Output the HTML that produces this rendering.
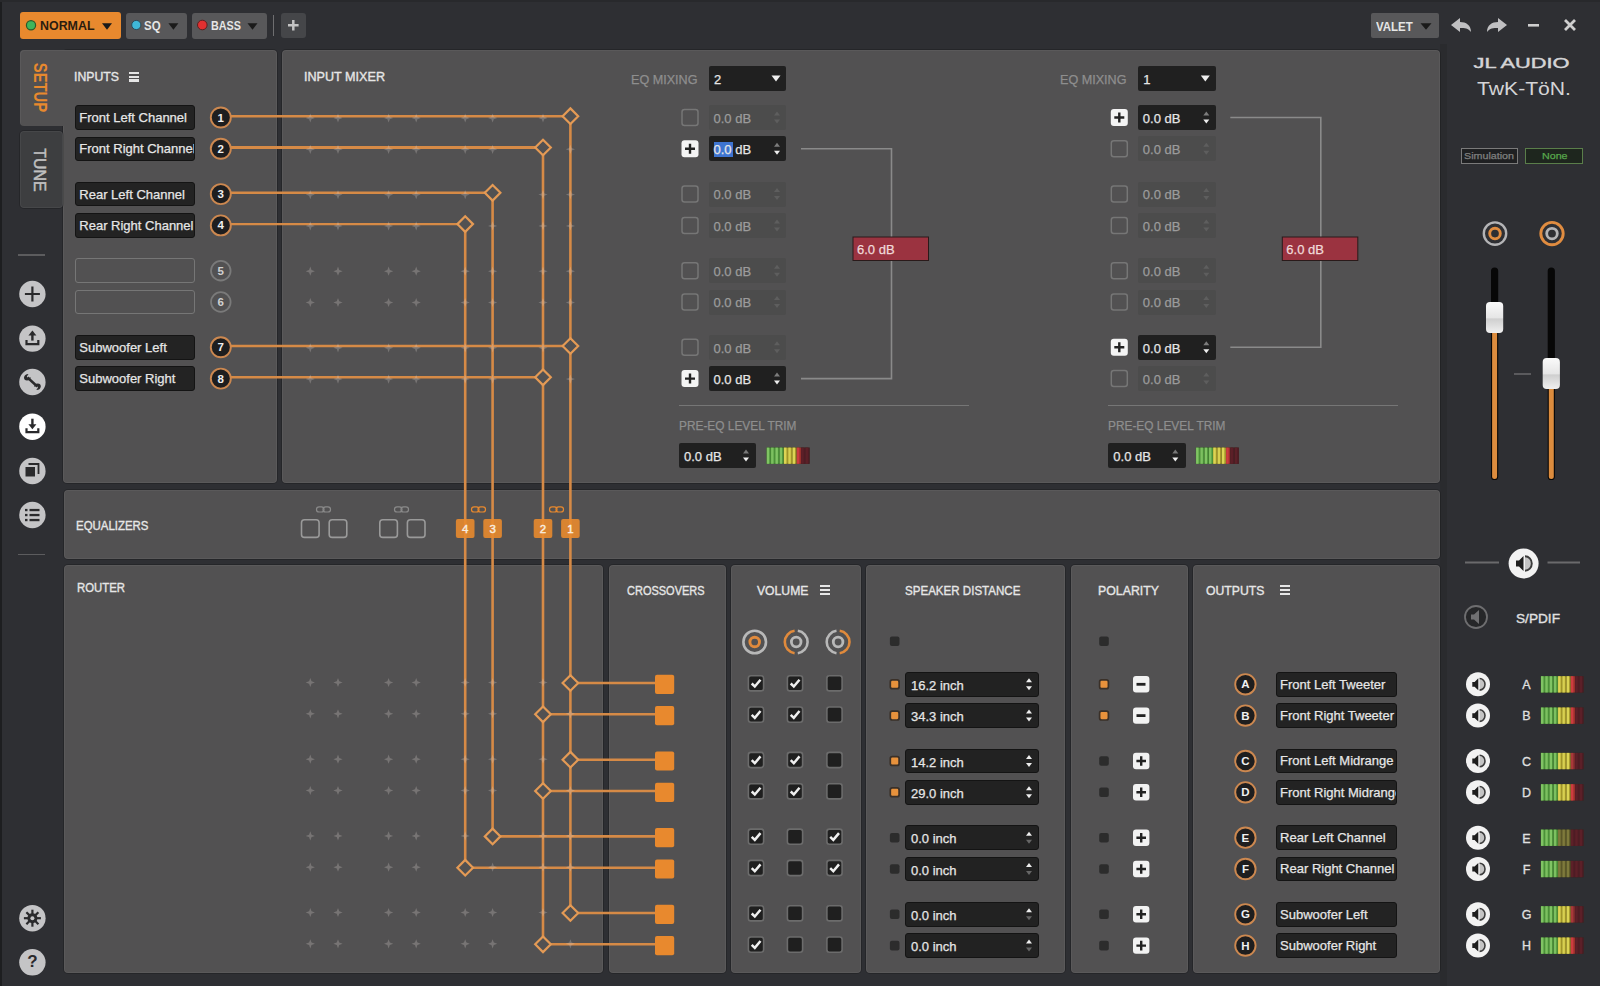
<!DOCTYPE html>
<html><head><meta charset="utf-8"><title>JL Audio TwK-TöN</title>
<style>
html,body{margin:0;padding:0;width:1600px;height:986px;overflow:hidden;background:#2e2f33;font-family:"Liberation Sans", sans-serif;}
#root{position:relative;width:1600px;height:986px;}
#root>div{position:absolute;box-sizing:border-box;}
#root>div>div{position:absolute}
svg{position:absolute;left:0;top:0;}
</style></head><body><div id="root">
<div style="left:0;top:0;width:2px;height:986px;background:#1d1e20"></div>
<div style="left:1440px;top:44px;width:7px;height:942px;background:#2a2b2e"></div>
<div style="left:0;top:0;width:1600px;height:2px;background:#28292c"></div>
<div style="left:63px;top:50px;width:214px;height:433px;background:#525152;border-radius:4px;box-shadow:inset 0 0 0 1px rgba(255,255,255,0.05), 0 0 0 1px rgba(0,0,0,0.18);"></div>
<div style="left:20px;top:50px;width:50px;height:76px;background:#525152;border-radius:4px 0 0 4px;box-shadow:inset 1px 1px 0 rgba(255,255,255,0.05)"></div>
<div style="left:20px;top:131px;width:43px;height:77px;background:#3d3e40;border-radius:4px;box-shadow:inset 0 0 0 1px rgba(255,255,255,0.05), 0 0 0 1px rgba(0,0,0,0.18);"></div>
<div style="left:282px;top:50px;width:1158px;height:433px;background:#525152;border-radius:4px;box-shadow:inset 0 0 0 1px rgba(255,255,255,0.05), 0 0 0 1px rgba(0,0,0,0.18);"></div>
<div style="left:63.5px;top:490px;width:1376.5px;height:69px;background:#525152;border-radius:4px;box-shadow:inset 0 0 0 1px rgba(255,255,255,0.05), 0 0 0 1px rgba(0,0,0,0.18);"></div>
<div style="left:64px;top:564.5px;width:538.5px;height:408.0px;background:#525152;border-radius:4px;box-shadow:inset 0 0 0 1px rgba(255,255,255,0.05), 0 0 0 1px rgba(0,0,0,0.18);"></div>
<div style="left:608.5px;top:564.5px;width:117.5px;height:408.0px;background:#525152;border-radius:4px;box-shadow:inset 0 0 0 1px rgba(255,255,255,0.05), 0 0 0 1px rgba(0,0,0,0.18);"></div>
<div style="left:730.5px;top:564.5px;width:130.0px;height:408.0px;background:#525152;border-radius:4px;box-shadow:inset 0 0 0 1px rgba(255,255,255,0.05), 0 0 0 1px rgba(0,0,0,0.18);"></div>
<div style="left:866px;top:564.5px;width:199px;height:408.0px;background:#525152;border-radius:4px;box-shadow:inset 0 0 0 1px rgba(255,255,255,0.05), 0 0 0 1px rgba(0,0,0,0.18);"></div>
<div style="left:1070.5px;top:564.5px;width:117.0px;height:408.0px;background:#525152;border-radius:4px;box-shadow:inset 0 0 0 1px rgba(255,255,255,0.05), 0 0 0 1px rgba(0,0,0,0.18);"></div>
<div style="left:1192.5px;top:564.5px;width:247.5px;height:408.0px;background:#525152;border-radius:4px;box-shadow:inset 0 0 0 1px rgba(255,255,255,0.05), 0 0 0 1px rgba(0,0,0,0.18);"></div>
<div style="left:20px;top:12px;width:101px;height:26.5px;background:#e8892e;border-radius:3px"></div>
<div style="left:126px;top:12.5px;width:61px;height:26px;background:#58585a;border-radius:3px"></div>
<div style="left:192px;top:12.5px;width:74.5px;height:26px;background:#58585a;border-radius:3px"></div>
<div style="left:272.5px;top:15px;width:1.5px;height:20.5px;background:#6e6e70"></div>
<div style="left:281px;top:12.5px;width:24.6px;height:25.5px;background:#454649;border-radius:3px"></div>
<div style="left:1371px;top:13px;width:68px;height:25px;background:#58585a;border-radius:2px"></div>
<div style="left:18px;top:254px;width:27px;height:1.5px;background:#5c5c5e"></div>
<div style="left:18px;top:553.5px;width:27px;height:1.5px;background:#5c5c5e"></div>
<div style="left:128.8px;top:72.0px;width:10.2px;height:2.2px;background:#e6e6e6"></div>
<div style="left:128.8px;top:75.7px;width:10.2px;height:2.2px;background:#e6e6e6"></div>
<div style="left:128.8px;top:79.4px;width:10.2px;height:2.2px;background:#e6e6e6"></div>
<div style="left:74.5px;top:105.2px;width:120px;height:24.6px;background:#232323;border-radius:3px;overflow:hidden;border:1.2px solid #141414"><div style="position:absolute;left:3.8px;top:-1.2px;height:24.6px;line-height:26.2px;font-size:13px;color:#e6e6e6;-webkit-text-stroke:0.25px #e6e6e6;white-space:nowrap">Front Left Channel</div></div>
<div style="left:74.5px;top:136.5px;width:120px;height:24.6px;background:#232323;border-radius:3px;overflow:hidden;border:1.2px solid #141414"><div style="position:absolute;left:3.8px;top:-1.2px;height:24.6px;line-height:26.2px;font-size:13px;color:#e6e6e6;-webkit-text-stroke:0.25px #e6e6e6;white-space:nowrap">Front Right Channel</div></div>
<div style="left:74.5px;top:181.79999999999998px;width:120px;height:24.6px;background:#232323;border-radius:3px;overflow:hidden;border:1.2px solid #141414"><div style="position:absolute;left:3.8px;top:-1.2px;height:24.6px;line-height:26.2px;font-size:13px;color:#e6e6e6;-webkit-text-stroke:0.25px #e6e6e6;white-space:nowrap">Rear Left Channel</div></div>
<div style="left:74.5px;top:213.1px;width:120px;height:24.6px;background:#232323;border-radius:3px;overflow:hidden;border:1.2px solid #141414"><div style="position:absolute;left:3.8px;top:-1.2px;height:24.6px;line-height:26.2px;font-size:13px;color:#e6e6e6;-webkit-text-stroke:0.25px #e6e6e6;white-space:nowrap">Rear Right Channel</div></div>
<div style="left:74.5px;top:258.4px;width:120px;height:24.6px;border:1.5px solid #767676;border-radius:3px;box-sizing:border-box"></div>
<div style="left:74.5px;top:289.7px;width:120px;height:24.6px;border:1.5px solid #767676;border-radius:3px;box-sizing:border-box"></div>
<div style="left:74.5px;top:335.0px;width:120px;height:24.6px;background:#232323;border-radius:3px;overflow:hidden;border:1.2px solid #141414"><div style="position:absolute;left:3.8px;top:-1.2px;height:24.6px;line-height:26.2px;font-size:13px;color:#e6e6e6;-webkit-text-stroke:0.25px #e6e6e6;white-space:nowrap">Subwoofer Left</div></div>
<div style="left:74.5px;top:366.3px;width:120px;height:24.6px;background:#232323;border-radius:3px;overflow:hidden;border:1.2px solid #141414"><div style="position:absolute;left:3.8px;top:-1.2px;height:24.6px;line-height:26.2px;font-size:13px;color:#e6e6e6;-webkit-text-stroke:0.25px #e6e6e6;white-space:nowrap">Subwoofer Right</div></div>
<div style="left:708.8px;top:65.7px;width:77.7px;height:25.4px;background:#202020;border-radius:2px"></div>
<div style="left:708.8px;top:105.0px;width:77.7px;height:25px;background:#4c4c4c;border-radius:2px"></div>
<div style="left:708.8px;top:136.3px;width:77.7px;height:25px;background:#202020;border-radius:2px"></div>
<div style="left:713.5px;top:141.7px;width:19px;height:15px;background:#3e74d0"></div>
<div style="left:708.8px;top:181.6px;width:77.7px;height:25px;background:#4c4c4c;border-radius:2px"></div>
<div style="left:708.8px;top:212.9px;width:77.7px;height:25px;background:#4c4c4c;border-radius:2px"></div>
<div style="left:708.8px;top:258.2px;width:77.7px;height:25px;background:#4c4c4c;border-radius:2px"></div>
<div style="left:708.8px;top:289.5px;width:77.7px;height:25px;background:#4c4c4c;border-radius:2px"></div>
<div style="left:708.8px;top:334.8px;width:77.7px;height:25px;background:#4c4c4c;border-radius:2px"></div>
<div style="left:708.8px;top:366.1px;width:77.7px;height:25px;background:#202020;border-radius:2px"></div>
<div style="left:678.5px;top:405.2px;width:290px;height:1.3px;background:#767676"></div>
<div style="left:679px;top:443px;width:77.3px;height:25px;background:#202020;border-radius:2px"></div>
<div style="left:1138.1px;top:65.7px;width:77.7px;height:25.4px;background:#202020;border-radius:2px"></div>
<div style="left:1138.1px;top:105.0px;width:77.7px;height:25px;background:#202020;border-radius:2px"></div>
<div style="left:1138.1px;top:136.3px;width:77.7px;height:25px;background:#4c4c4c;border-radius:2px"></div>
<div style="left:1138.1px;top:181.6px;width:77.7px;height:25px;background:#4c4c4c;border-radius:2px"></div>
<div style="left:1138.1px;top:212.9px;width:77.7px;height:25px;background:#4c4c4c;border-radius:2px"></div>
<div style="left:1138.1px;top:258.2px;width:77.7px;height:25px;background:#4c4c4c;border-radius:2px"></div>
<div style="left:1138.1px;top:289.5px;width:77.7px;height:25px;background:#4c4c4c;border-radius:2px"></div>
<div style="left:1138.1px;top:334.8px;width:77.7px;height:25px;background:#202020;border-radius:2px"></div>
<div style="left:1138.1px;top:366.1px;width:77.7px;height:25px;background:#4c4c4c;border-radius:2px"></div>
<div style="left:1107.8px;top:405.2px;width:290px;height:1.3px;background:#767676"></div>
<div style="left:1108.3px;top:443px;width:77.3px;height:25px;background:#202020;border-radius:2px"></div>
<div style="left:819.5px;top:585.1999999999999px;width:10.2px;height:2.2px;background:#e6e6e6"></div>
<div style="left:819.5px;top:588.9px;width:10.2px;height:2.2px;background:#e6e6e6"></div>
<div style="left:819.5px;top:592.6px;width:10.2px;height:2.2px;background:#e6e6e6"></div>
<div style="left:1280px;top:585.1999999999999px;width:10.2px;height:2.2px;background:#e6e6e6"></div>
<div style="left:1280px;top:588.9px;width:10.2px;height:2.2px;background:#e6e6e6"></div>
<div style="left:1280px;top:592.6px;width:10.2px;height:2.2px;background:#e6e6e6"></div>
<div style="left:905.2px;top:671.9px;width:133.5px;height:24.9px;background:#222222;border-radius:3px;border:1.3px solid #141414"></div>
<div style="left:905.2px;top:703.2px;width:133.5px;height:24.9px;background:#222222;border-radius:3px;border:1.3px solid #141414"></div>
<div style="left:905.2px;top:748.6px;width:133.5px;height:24.9px;background:#222222;border-radius:3px;border:1.3px solid #141414"></div>
<div style="left:905.2px;top:779.9px;width:133.5px;height:24.9px;background:#222222;border-radius:3px;border:1.3px solid #141414"></div>
<div style="left:905.2px;top:825.3000000000001px;width:133.5px;height:24.9px;background:#222222;border-radius:3px;border:1.3px solid #141414"></div>
<div style="left:905.2px;top:856.6px;width:133.5px;height:24.9px;background:#222222;border-radius:3px;border:1.3px solid #141414"></div>
<div style="left:905.2px;top:901.9px;width:133.5px;height:24.9px;background:#222222;border-radius:3px;border:1.3px solid #141414"></div>
<div style="left:905.2px;top:933.2px;width:133.5px;height:24.9px;background:#222222;border-radius:3px;border:1.3px solid #141414"></div>
<div style="left:1275.8px;top:671.9px;width:120.8px;height:24.8px;background:#232323;border-radius:3px;overflow:hidden;border:1.2px solid #141414"><div style="position:absolute;left:3.3px;top:-1.2px;height:24.8px;line-height:26.2px;font-size:13px;color:#e6e6e6;-webkit-text-stroke:0.25px #e6e6e6;white-space:nowrap">Front Left Tweeter</div></div>
<div style="left:1275.8px;top:703.2px;width:120.8px;height:24.8px;background:#232323;border-radius:3px;overflow:hidden;border:1.2px solid #141414"><div style="position:absolute;left:3.3px;top:-1.2px;height:24.8px;line-height:26.2px;font-size:13px;color:#e6e6e6;-webkit-text-stroke:0.25px #e6e6e6;white-space:nowrap">Front Right Tweeter</div></div>
<div style="left:1275.8px;top:748.6px;width:120.8px;height:24.8px;background:#232323;border-radius:3px;overflow:hidden;border:1.2px solid #141414"><div style="position:absolute;left:3.3px;top:-1.2px;height:24.8px;line-height:26.2px;font-size:13px;color:#e6e6e6;-webkit-text-stroke:0.25px #e6e6e6;white-space:nowrap">Front Left Midrange</div></div>
<div style="left:1275.8px;top:779.9px;width:120.8px;height:24.8px;background:#232323;border-radius:3px;overflow:hidden;border:1.2px solid #141414"><div style="position:absolute;left:3.3px;top:-1.2px;height:24.8px;line-height:26.2px;font-size:13px;color:#e6e6e6;-webkit-text-stroke:0.25px #e6e6e6;white-space:nowrap">Front Right Midrange</div></div>
<div style="left:1275.8px;top:825.3000000000001px;width:120.8px;height:24.8px;background:#232323;border-radius:3px;overflow:hidden;border:1.2px solid #141414"><div style="position:absolute;left:3.3px;top:-1.2px;height:24.8px;line-height:26.2px;font-size:13px;color:#e6e6e6;-webkit-text-stroke:0.25px #e6e6e6;white-space:nowrap">Rear Left Channel</div></div>
<div style="left:1275.8px;top:856.6px;width:120.8px;height:24.8px;background:#232323;border-radius:3px;overflow:hidden;border:1.2px solid #141414"><div style="position:absolute;left:3.3px;top:-1.2px;height:24.8px;line-height:26.2px;font-size:13px;color:#e6e6e6;-webkit-text-stroke:0.25px #e6e6e6;white-space:nowrap">Rear Right Channel</div></div>
<div style="left:1275.8px;top:901.9px;width:120.8px;height:24.8px;background:#232323;border-radius:3px;overflow:hidden;border:1.2px solid #141414"><div style="position:absolute;left:3.3px;top:-1.2px;height:24.8px;line-height:26.2px;font-size:13px;color:#e6e6e6;-webkit-text-stroke:0.25px #e6e6e6;white-space:nowrap">Subwoofer Left</div></div>
<div style="left:1275.8px;top:933.2px;width:120.8px;height:24.8px;background:#232323;border-radius:3px;overflow:hidden;border:1.2px solid #141414"><div style="position:absolute;left:3.3px;top:-1.2px;height:24.8px;line-height:26.2px;font-size:13px;color:#e6e6e6;-webkit-text-stroke:0.25px #e6e6e6;white-space:nowrap">Subwoofer Right</div></div>
<div style="left:1460.5px;top:147.6px;width:57.4px;height:16.8px;border:1.2px solid #7a7a7a;box-sizing:border-box;background:#1f2022"></div>
<div style="left:1525px;top:147.6px;width:58px;height:16.8px;border:1.2px solid #5a7e4a;box-sizing:border-box;background:#1e261e"></div>
<svg width="1600" height="986" viewBox="0 0 1600 986" style="position:absolute;left:0;top:0">
<defs><linearGradient id="knob" x1="0" y1="0" x2="0" y2="1"><stop offset="0" stop-color="#fafafa"/><stop offset="0.5" stop-color="#e6e6e6"/><stop offset="0.55" stop-color="#cfcfcf"/><stop offset="1" stop-color="#f0f0f0"/></linearGradient></defs>
<circle cx="31" cy="25.3" r="4.6" fill="#3fb55a" stroke="#2a5a2a" stroke-width="1.2"/>
<path d="M102.0 23.25 L112.0 23.25 L107 29.75 Z" fill="#1a1a1a"/>
<circle cx="136.3" cy="25" r="4.6" fill="#3fb8d8" stroke="#2a4a5a" stroke-width="1"/>
<path d="M168.4 23.25 L178.4 23.25 L173.4 29.75 Z" fill="#1a1a1a"/>
<circle cx="202.3" cy="25" r="4.8" fill="#e03030" stroke="#5a2020" stroke-width="1"/>
<path d="M247.5 23.25 L257.5 23.25 L252.5 29.75 Z" fill="#1a1a1a"/>
<path d="M293.3 20 V30.5 M288 25.3 H298.6" stroke="#c4c4c4" stroke-width="2.5"/>
<path d="M1420.5 23.25 L1431.5 23.25 L1426 29.75 Z" fill="#1a1a1a"/>
<path d="M1451 25 L1460 18 L1460 22 C1466 22 1471 25 1471 32 C1468 28 1465 28 1460 28 L1460 32 Z" fill="#c0c0c2"/>
<path d="M1507 25 L1498 18 L1498 22 C1492 22 1487 25 1487 32 C1490 28 1493 28 1498 28 L1498 32 Z" fill="#c0c0c2"/>
<path d="M1528 25.3 H1539" stroke="#cfcfcf" stroke-width="2.6"/>
<path d="M1565 20 L1575 30 M1575 20 L1565 30" stroke="#cfcfcf" stroke-width="2.8"/>
<text x="1473.5" y="68" font-size="13.8" fill="#d4d4d6" stroke="#d4d4d6" stroke-width="0.4" textLength="96" lengthAdjust="spacingAndGlyphs" font-family="Liberation Sans">JL AUDIO</text>
<text x="1477" y="94.5" font-size="18.5" fill="#d4d4d6" textLength="94" lengthAdjust="spacingAndGlyphs" font-family="Liberation Sans">TwK-TöN.</text>
<circle cx="32.4" cy="294" r="13.2" fill="#c4c4c6"/>
<path d="M32.4 286.5 V301.5 M24.9 294 H39.9" stroke="#2a2a2c" stroke-width="2.2"/>
<circle cx="32.4" cy="338.6" r="13.2" fill="#c4c4c6"/>
<path d="M32.4 340.6 V334.6" stroke="#2a2a2c" stroke-width="2.4"/><path d="M28.4 335.6 L32.4 330.6 L36.4 335.6 Z" fill="#2a2a2c"/>
<path d="M26.5 340.1 V344.1 H38.3 V340.1" stroke="#2a2a2c" stroke-width="2.2" fill="none"/>
<circle cx="32.4" cy="382" r="13.2" fill="#c4c4c6"/>
<path d="M27.5 377.5 L37.3 386.5" stroke="#2a2a2c" stroke-width="2.4"/><path d="M24 377.5 Q24.5 374 28.5 374 L26.8 376.4 L28.2 378.4 L30.6 377 Q30.6 380.5 27 380.5 Q24 380.5 24 377.5 Z" fill="#2a2a2c"/><path d="M40.8 386.5 Q40.3 390 36.3 390 L38 387.6 L36.6 385.6 L34.2 387 Q34.2 383.5 37.8 383.5 Q40.8 383.5 40.8 386.5 Z" fill="#2a2a2c"/>
<circle cx="32.4" cy="426.7" r="13.2" fill="#ffffff"/>
<path d="M32.4 418.7 V425.7" stroke="#2a2a2c" stroke-width="2.4"/><path d="M28.4 424.2 L32.4 429.2 L36.4 424.2 Z" fill="#2a2a2c"/>
<path d="M26.5 428.2 V432.2 H38.3 V428.2" stroke="#2a2a2c" stroke-width="2.2" fill="none"/>
<circle cx="32.4" cy="471" r="13.2" fill="#c4c4c6"/>
<rect x="25.5" y="467" width="9.5" height="9.5" fill="#2a2a2c"/><path d="M28.5 464 H38.5 V474" stroke="#2a2a2c" stroke-width="1.8" fill="none"/>
<circle cx="32.4" cy="515" r="13.2" fill="#c4c4c6"/>
<rect x="25" y="508.9" width="2.5" height="2.3" fill="#2a2a2c"/><rect x="29.5" y="508.9" width="10" height="2.3" fill="#2a2a2c"/>
<rect x="25" y="513.9" width="2.5" height="2.3" fill="#2a2a2c"/><rect x="29.5" y="513.9" width="10" height="2.3" fill="#2a2a2c"/>
<rect x="25" y="518.9" width="2.5" height="2.3" fill="#2a2a2c"/><rect x="29.5" y="518.9" width="10" height="2.3" fill="#2a2a2c"/>
<circle cx="32.4" cy="918.2" r="13.2" fill="#c4c4c6"/>
<circle cx="32.4" cy="918.2" r="5" fill="#2a2a2c"/><circle cx="32.4" cy="918.2" r="2" fill="#c4c4c6"/>
<path d="M36.40 918.20 L40.90 918.20" stroke="#2a2a2c" stroke-width="2.2"/>
<path d="M35.23 921.03 L38.41 924.21" stroke="#2a2a2c" stroke-width="2.2"/>
<path d="M32.40 922.20 L32.40 926.70" stroke="#2a2a2c" stroke-width="2.2"/>
<path d="M29.57 921.03 L26.39 924.21" stroke="#2a2a2c" stroke-width="2.2"/>
<path d="M28.40 918.20 L23.90 918.20" stroke="#2a2a2c" stroke-width="2.2"/>
<path d="M29.57 915.37 L26.39 912.19" stroke="#2a2a2c" stroke-width="2.2"/>
<path d="M32.40 914.20 L32.40 909.70" stroke="#2a2a2c" stroke-width="2.2"/>
<path d="M35.23 915.37 L38.41 912.19" stroke="#2a2a2c" stroke-width="2.2"/>
<circle cx="32.4" cy="962.3" r="13.2" fill="#c4c4c6"/>
<circle cx="220.8" cy="117.5" r="10" fill="#1e1e1f" stroke="#cc8850" stroke-width="1.9"/>
<circle cx="220.8" cy="148.8" r="10" fill="#1e1e1f" stroke="#cc8850" stroke-width="1.9"/>
<circle cx="220.8" cy="194.1" r="10" fill="#1e1e1f" stroke="#cc8850" stroke-width="1.9"/>
<circle cx="220.8" cy="225.4" r="10" fill="#1e1e1f" stroke="#cc8850" stroke-width="1.9"/>
<circle cx="220.8" cy="270.7" r="9.8" fill="none" stroke="#7a7a7a" stroke-width="1.8"/>
<circle cx="220.8" cy="302" r="9.8" fill="none" stroke="#7a7a7a" stroke-width="1.8"/>
<circle cx="220.8" cy="347.3" r="10" fill="#1e1e1f" stroke="#cc8850" stroke-width="1.9"/>
<circle cx="220.8" cy="378.6" r="10" fill="#1e1e1f" stroke="#cc8850" stroke-width="1.9"/>
<path d="M231 116.2 H570.4" stroke="#d68a46" stroke-width="2.4" fill="none"/>
<path d="M231 147.5 H543" stroke="#d68a46" stroke-width="3.1" fill="none"/>
<path d="M231 192.79999999999998 H492.6" stroke="#d68a46" stroke-width="2.4" fill="none"/>
<path d="M231 224.1 H465.2" stroke="#d68a46" stroke-width="2.4" fill="none"/>
<path d="M231 346.0 H570.4" stroke="#d68a46" stroke-width="2.4" fill="none"/>
<path d="M231 377.3 H543" stroke="#d68a46" stroke-width="2.4" fill="none"/>
<path d="M570.4 116.2 V913.0" stroke="#d68a46" stroke-width="2.6"/>
<path d="M543 147.5 V944.3000000000001" stroke="#d68a46" stroke-width="2.6"/>
<path d="M492.6 192.79999999999998 V836.4000000000001" stroke="#d68a46" stroke-width="2.6"/>
<path d="M465.2 224.1 V867.7" stroke="#d68a46" stroke-width="2.6"/>
<path d="M570.4 683.0 H656" stroke="#d68a46" stroke-width="2.6"/>
<path d="M543 714.3000000000001 H656" stroke="#d68a46" stroke-width="2.6"/>
<path d="M570.4 759.7 H656" stroke="#d68a46" stroke-width="2.6"/>
<path d="M543 791.0 H656" stroke="#d68a46" stroke-width="2.6"/>
<path d="M492.6 836.4000000000001 H656" stroke="#d68a46" stroke-width="2.6"/>
<path d="M465.2 867.7 H656" stroke="#d68a46" stroke-width="2.6"/>
<path d="M570.4 913.0 H656" stroke="#d68a46" stroke-width="2.6"/>
<path d="M543 944.3000000000001 H656" stroke="#d68a46" stroke-width="2.6"/>
<path d="M305.70 118.00 L310.30 116.30 L314.90 118.00 L310.30 119.70 Z M310.30 113.40 L312.00 118.00 L310.30 122.60 L308.60 118.00 Z" fill="rgba(215,210,205,0.28)"/>
<path d="M333.40 118.00 L338.00 116.30 L342.60 118.00 L338.00 119.70 Z M338.00 113.40 L339.70 118.00 L338.00 122.60 L336.30 118.00 Z" fill="rgba(215,210,205,0.28)"/>
<path d="M384.00 118.00 L388.60 116.30 L393.20 118.00 L388.60 119.70 Z M388.60 113.40 L390.30 118.00 L388.60 122.60 L386.90 118.00 Z" fill="rgba(215,210,205,0.28)"/>
<path d="M411.60 118.00 L416.20 116.30 L420.80 118.00 L416.20 119.70 Z M416.20 113.40 L417.90 118.00 L416.20 122.60 L414.50 118.00 Z" fill="rgba(215,210,205,0.28)"/>
<path d="M460.60 118.00 L465.20 116.30 L469.80 118.00 L465.20 119.70 Z M465.20 113.40 L466.90 118.00 L465.20 122.60 L463.50 118.00 Z" fill="rgba(215,210,205,0.28)"/>
<path d="M488.00 118.00 L492.60 116.30 L497.20 118.00 L492.60 119.70 Z M492.60 113.40 L494.30 118.00 L492.60 122.60 L490.90 118.00 Z" fill="rgba(215,210,205,0.28)"/>
<path d="M538.40 118.00 L543.00 116.30 L547.60 118.00 L543.00 119.70 Z M543.00 113.40 L544.70 118.00 L543.00 122.60 L541.30 118.00 Z" fill="rgba(215,210,205,0.28)"/>
<path d="M565.80 118.00 L570.40 116.30 L575.00 118.00 L570.40 119.70 Z M570.40 113.40 L572.10 118.00 L570.40 122.60 L568.70 118.00 Z" fill="rgba(215,210,205,0.28)"/>
<path d="M305.70 149.30 L310.30 147.60 L314.90 149.30 L310.30 151.00 Z M310.30 144.70 L312.00 149.30 L310.30 153.90 L308.60 149.30 Z" fill="rgba(215,210,205,0.28)"/>
<path d="M333.40 149.30 L338.00 147.60 L342.60 149.30 L338.00 151.00 Z M338.00 144.70 L339.70 149.30 L338.00 153.90 L336.30 149.30 Z" fill="rgba(215,210,205,0.28)"/>
<path d="M384.00 149.30 L388.60 147.60 L393.20 149.30 L388.60 151.00 Z M388.60 144.70 L390.30 149.30 L388.60 153.90 L386.90 149.30 Z" fill="rgba(215,210,205,0.28)"/>
<path d="M411.60 149.30 L416.20 147.60 L420.80 149.30 L416.20 151.00 Z M416.20 144.70 L417.90 149.30 L416.20 153.90 L414.50 149.30 Z" fill="rgba(215,210,205,0.28)"/>
<path d="M460.60 149.30 L465.20 147.60 L469.80 149.30 L465.20 151.00 Z M465.20 144.70 L466.90 149.30 L465.20 153.90 L463.50 149.30 Z" fill="rgba(215,210,205,0.28)"/>
<path d="M488.00 149.30 L492.60 147.60 L497.20 149.30 L492.60 151.00 Z M492.60 144.70 L494.30 149.30 L492.60 153.90 L490.90 149.30 Z" fill="rgba(215,210,205,0.28)"/>
<path d="M538.40 149.30 L543.00 147.60 L547.60 149.30 L543.00 151.00 Z M543.00 144.70 L544.70 149.30 L543.00 153.90 L541.30 149.30 Z" fill="rgba(215,210,205,0.28)"/>
<path d="M565.80 149.30 L570.40 147.60 L575.00 149.30 L570.40 151.00 Z M570.40 144.70 L572.10 149.30 L570.40 153.90 L568.70 149.30 Z" fill="rgba(215,210,205,0.28)"/>
<path d="M305.70 194.60 L310.30 192.90 L314.90 194.60 L310.30 196.30 Z M310.30 190.00 L312.00 194.60 L310.30 199.20 L308.60 194.60 Z" fill="rgba(215,210,205,0.28)"/>
<path d="M333.40 194.60 L338.00 192.90 L342.60 194.60 L338.00 196.30 Z M338.00 190.00 L339.70 194.60 L338.00 199.20 L336.30 194.60 Z" fill="rgba(215,210,205,0.28)"/>
<path d="M384.00 194.60 L388.60 192.90 L393.20 194.60 L388.60 196.30 Z M388.60 190.00 L390.30 194.60 L388.60 199.20 L386.90 194.60 Z" fill="rgba(215,210,205,0.28)"/>
<path d="M411.60 194.60 L416.20 192.90 L420.80 194.60 L416.20 196.30 Z M416.20 190.00 L417.90 194.60 L416.20 199.20 L414.50 194.60 Z" fill="rgba(215,210,205,0.28)"/>
<path d="M460.60 194.60 L465.20 192.90 L469.80 194.60 L465.20 196.30 Z M465.20 190.00 L466.90 194.60 L465.20 199.20 L463.50 194.60 Z" fill="rgba(215,210,205,0.28)"/>
<path d="M488.00 194.60 L492.60 192.90 L497.20 194.60 L492.60 196.30 Z M492.60 190.00 L494.30 194.60 L492.60 199.20 L490.90 194.60 Z" fill="rgba(215,210,205,0.28)"/>
<path d="M538.40 194.60 L543.00 192.90 L547.60 194.60 L543.00 196.30 Z M543.00 190.00 L544.70 194.60 L543.00 199.20 L541.30 194.60 Z" fill="rgba(215,210,205,0.28)"/>
<path d="M565.80 194.60 L570.40 192.90 L575.00 194.60 L570.40 196.30 Z M570.40 190.00 L572.10 194.60 L570.40 199.20 L568.70 194.60 Z" fill="rgba(215,210,205,0.28)"/>
<path d="M305.70 225.90 L310.30 224.20 L314.90 225.90 L310.30 227.60 Z M310.30 221.30 L312.00 225.90 L310.30 230.50 L308.60 225.90 Z" fill="rgba(215,210,205,0.28)"/>
<path d="M333.40 225.90 L338.00 224.20 L342.60 225.90 L338.00 227.60 Z M338.00 221.30 L339.70 225.90 L338.00 230.50 L336.30 225.90 Z" fill="rgba(215,210,205,0.28)"/>
<path d="M384.00 225.90 L388.60 224.20 L393.20 225.90 L388.60 227.60 Z M388.60 221.30 L390.30 225.90 L388.60 230.50 L386.90 225.90 Z" fill="rgba(215,210,205,0.28)"/>
<path d="M411.60 225.90 L416.20 224.20 L420.80 225.90 L416.20 227.60 Z M416.20 221.30 L417.90 225.90 L416.20 230.50 L414.50 225.90 Z" fill="rgba(215,210,205,0.28)"/>
<path d="M460.60 225.90 L465.20 224.20 L469.80 225.90 L465.20 227.60 Z M465.20 221.30 L466.90 225.90 L465.20 230.50 L463.50 225.90 Z" fill="rgba(215,210,205,0.28)"/>
<path d="M488.00 225.90 L492.60 224.20 L497.20 225.90 L492.60 227.60 Z M492.60 221.30 L494.30 225.90 L492.60 230.50 L490.90 225.90 Z" fill="rgba(215,210,205,0.28)"/>
<path d="M538.40 225.90 L543.00 224.20 L547.60 225.90 L543.00 227.60 Z M543.00 221.30 L544.70 225.90 L543.00 230.50 L541.30 225.90 Z" fill="rgba(215,210,205,0.28)"/>
<path d="M565.80 225.90 L570.40 224.20 L575.00 225.90 L570.40 227.60 Z M570.40 221.30 L572.10 225.90 L570.40 230.50 L568.70 225.90 Z" fill="rgba(215,210,205,0.28)"/>
<path d="M305.70 271.20 L310.30 269.50 L314.90 271.20 L310.30 272.90 Z M310.30 266.60 L312.00 271.20 L310.30 275.80 L308.60 271.20 Z" fill="rgba(215,210,205,0.28)"/>
<path d="M333.40 271.20 L338.00 269.50 L342.60 271.20 L338.00 272.90 Z M338.00 266.60 L339.70 271.20 L338.00 275.80 L336.30 271.20 Z" fill="rgba(215,210,205,0.28)"/>
<path d="M384.00 271.20 L388.60 269.50 L393.20 271.20 L388.60 272.90 Z M388.60 266.60 L390.30 271.20 L388.60 275.80 L386.90 271.20 Z" fill="rgba(215,210,205,0.28)"/>
<path d="M411.60 271.20 L416.20 269.50 L420.80 271.20 L416.20 272.90 Z M416.20 266.60 L417.90 271.20 L416.20 275.80 L414.50 271.20 Z" fill="rgba(215,210,205,0.28)"/>
<path d="M460.60 271.20 L465.20 269.50 L469.80 271.20 L465.20 272.90 Z M465.20 266.60 L466.90 271.20 L465.20 275.80 L463.50 271.20 Z" fill="rgba(215,210,205,0.28)"/>
<path d="M488.00 271.20 L492.60 269.50 L497.20 271.20 L492.60 272.90 Z M492.60 266.60 L494.30 271.20 L492.60 275.80 L490.90 271.20 Z" fill="rgba(215,210,205,0.28)"/>
<path d="M538.40 271.20 L543.00 269.50 L547.60 271.20 L543.00 272.90 Z M543.00 266.60 L544.70 271.20 L543.00 275.80 L541.30 271.20 Z" fill="rgba(215,210,205,0.28)"/>
<path d="M565.80 271.20 L570.40 269.50 L575.00 271.20 L570.40 272.90 Z M570.40 266.60 L572.10 271.20 L570.40 275.80 L568.70 271.20 Z" fill="rgba(215,210,205,0.28)"/>
<path d="M305.70 302.50 L310.30 300.80 L314.90 302.50 L310.30 304.20 Z M310.30 297.90 L312.00 302.50 L310.30 307.10 L308.60 302.50 Z" fill="rgba(215,210,205,0.28)"/>
<path d="M333.40 302.50 L338.00 300.80 L342.60 302.50 L338.00 304.20 Z M338.00 297.90 L339.70 302.50 L338.00 307.10 L336.30 302.50 Z" fill="rgba(215,210,205,0.28)"/>
<path d="M384.00 302.50 L388.60 300.80 L393.20 302.50 L388.60 304.20 Z M388.60 297.90 L390.30 302.50 L388.60 307.10 L386.90 302.50 Z" fill="rgba(215,210,205,0.28)"/>
<path d="M411.60 302.50 L416.20 300.80 L420.80 302.50 L416.20 304.20 Z M416.20 297.90 L417.90 302.50 L416.20 307.10 L414.50 302.50 Z" fill="rgba(215,210,205,0.28)"/>
<path d="M460.60 302.50 L465.20 300.80 L469.80 302.50 L465.20 304.20 Z M465.20 297.90 L466.90 302.50 L465.20 307.10 L463.50 302.50 Z" fill="rgba(215,210,205,0.28)"/>
<path d="M488.00 302.50 L492.60 300.80 L497.20 302.50 L492.60 304.20 Z M492.60 297.90 L494.30 302.50 L492.60 307.10 L490.90 302.50 Z" fill="rgba(215,210,205,0.28)"/>
<path d="M538.40 302.50 L543.00 300.80 L547.60 302.50 L543.00 304.20 Z M543.00 297.90 L544.70 302.50 L543.00 307.10 L541.30 302.50 Z" fill="rgba(215,210,205,0.28)"/>
<path d="M565.80 302.50 L570.40 300.80 L575.00 302.50 L570.40 304.20 Z M570.40 297.90 L572.10 302.50 L570.40 307.10 L568.70 302.50 Z" fill="rgba(215,210,205,0.28)"/>
<path d="M305.70 347.80 L310.30 346.10 L314.90 347.80 L310.30 349.50 Z M310.30 343.20 L312.00 347.80 L310.30 352.40 L308.60 347.80 Z" fill="rgba(215,210,205,0.28)"/>
<path d="M333.40 347.80 L338.00 346.10 L342.60 347.80 L338.00 349.50 Z M338.00 343.20 L339.70 347.80 L338.00 352.40 L336.30 347.80 Z" fill="rgba(215,210,205,0.28)"/>
<path d="M384.00 347.80 L388.60 346.10 L393.20 347.80 L388.60 349.50 Z M388.60 343.20 L390.30 347.80 L388.60 352.40 L386.90 347.80 Z" fill="rgba(215,210,205,0.28)"/>
<path d="M411.60 347.80 L416.20 346.10 L420.80 347.80 L416.20 349.50 Z M416.20 343.20 L417.90 347.80 L416.20 352.40 L414.50 347.80 Z" fill="rgba(215,210,205,0.28)"/>
<path d="M460.60 347.80 L465.20 346.10 L469.80 347.80 L465.20 349.50 Z M465.20 343.20 L466.90 347.80 L465.20 352.40 L463.50 347.80 Z" fill="rgba(215,210,205,0.28)"/>
<path d="M488.00 347.80 L492.60 346.10 L497.20 347.80 L492.60 349.50 Z M492.60 343.20 L494.30 347.80 L492.60 352.40 L490.90 347.80 Z" fill="rgba(215,210,205,0.28)"/>
<path d="M538.40 347.80 L543.00 346.10 L547.60 347.80 L543.00 349.50 Z M543.00 343.20 L544.70 347.80 L543.00 352.40 L541.30 347.80 Z" fill="rgba(215,210,205,0.28)"/>
<path d="M565.80 347.80 L570.40 346.10 L575.00 347.80 L570.40 349.50 Z M570.40 343.20 L572.10 347.80 L570.40 352.40 L568.70 347.80 Z" fill="rgba(215,210,205,0.28)"/>
<path d="M305.70 379.10 L310.30 377.40 L314.90 379.10 L310.30 380.80 Z M310.30 374.50 L312.00 379.10 L310.30 383.70 L308.60 379.10 Z" fill="rgba(215,210,205,0.28)"/>
<path d="M333.40 379.10 L338.00 377.40 L342.60 379.10 L338.00 380.80 Z M338.00 374.50 L339.70 379.10 L338.00 383.70 L336.30 379.10 Z" fill="rgba(215,210,205,0.28)"/>
<path d="M384.00 379.10 L388.60 377.40 L393.20 379.10 L388.60 380.80 Z M388.60 374.50 L390.30 379.10 L388.60 383.70 L386.90 379.10 Z" fill="rgba(215,210,205,0.28)"/>
<path d="M411.60 379.10 L416.20 377.40 L420.80 379.10 L416.20 380.80 Z M416.20 374.50 L417.90 379.10 L416.20 383.70 L414.50 379.10 Z" fill="rgba(215,210,205,0.28)"/>
<path d="M460.60 379.10 L465.20 377.40 L469.80 379.10 L465.20 380.80 Z M465.20 374.50 L466.90 379.10 L465.20 383.70 L463.50 379.10 Z" fill="rgba(215,210,205,0.28)"/>
<path d="M488.00 379.10 L492.60 377.40 L497.20 379.10 L492.60 380.80 Z M492.60 374.50 L494.30 379.10 L492.60 383.70 L490.90 379.10 Z" fill="rgba(215,210,205,0.28)"/>
<path d="M538.40 379.10 L543.00 377.40 L547.60 379.10 L543.00 380.80 Z M543.00 374.50 L544.70 379.10 L543.00 383.70 L541.30 379.10 Z" fill="rgba(215,210,205,0.28)"/>
<path d="M565.80 379.10 L570.40 377.40 L575.00 379.10 L570.40 380.80 Z M570.40 374.50 L572.10 379.10 L570.40 383.70 L568.70 379.10 Z" fill="rgba(215,210,205,0.28)"/>
<path d="M305.70 682.50 L310.30 680.80 L314.90 682.50 L310.30 684.20 Z M310.30 677.90 L312.00 682.50 L310.30 687.10 L308.60 682.50 Z" fill="rgba(215,210,205,0.28)"/>
<path d="M333.40 682.50 L338.00 680.80 L342.60 682.50 L338.00 684.20 Z M338.00 677.90 L339.70 682.50 L338.00 687.10 L336.30 682.50 Z" fill="rgba(215,210,205,0.28)"/>
<path d="M384.00 682.50 L388.60 680.80 L393.20 682.50 L388.60 684.20 Z M388.60 677.90 L390.30 682.50 L388.60 687.10 L386.90 682.50 Z" fill="rgba(215,210,205,0.28)"/>
<path d="M411.60 682.50 L416.20 680.80 L420.80 682.50 L416.20 684.20 Z M416.20 677.90 L417.90 682.50 L416.20 687.10 L414.50 682.50 Z" fill="rgba(215,210,205,0.28)"/>
<path d="M460.60 682.50 L465.20 680.80 L469.80 682.50 L465.20 684.20 Z M465.20 677.90 L466.90 682.50 L465.20 687.10 L463.50 682.50 Z" fill="rgba(215,210,205,0.28)"/>
<path d="M488.00 682.50 L492.60 680.80 L497.20 682.50 L492.60 684.20 Z M492.60 677.90 L494.30 682.50 L492.60 687.10 L490.90 682.50 Z" fill="rgba(215,210,205,0.28)"/>
<path d="M538.40 682.50 L543.00 680.80 L547.60 682.50 L543.00 684.20 Z M543.00 677.90 L544.70 682.50 L543.00 687.10 L541.30 682.50 Z" fill="rgba(215,210,205,0.28)"/>
<path d="M565.80 682.50 L570.40 680.80 L575.00 682.50 L570.40 684.20 Z M570.40 677.90 L572.10 682.50 L570.40 687.10 L568.70 682.50 Z" fill="rgba(215,210,205,0.28)"/>
<path d="M305.70 713.80 L310.30 712.10 L314.90 713.80 L310.30 715.50 Z M310.30 709.20 L312.00 713.80 L310.30 718.40 L308.60 713.80 Z" fill="rgba(215,210,205,0.28)"/>
<path d="M333.40 713.80 L338.00 712.10 L342.60 713.80 L338.00 715.50 Z M338.00 709.20 L339.70 713.80 L338.00 718.40 L336.30 713.80 Z" fill="rgba(215,210,205,0.28)"/>
<path d="M384.00 713.80 L388.60 712.10 L393.20 713.80 L388.60 715.50 Z M388.60 709.20 L390.30 713.80 L388.60 718.40 L386.90 713.80 Z" fill="rgba(215,210,205,0.28)"/>
<path d="M411.60 713.80 L416.20 712.10 L420.80 713.80 L416.20 715.50 Z M416.20 709.20 L417.90 713.80 L416.20 718.40 L414.50 713.80 Z" fill="rgba(215,210,205,0.28)"/>
<path d="M460.60 713.80 L465.20 712.10 L469.80 713.80 L465.20 715.50 Z M465.20 709.20 L466.90 713.80 L465.20 718.40 L463.50 713.80 Z" fill="rgba(215,210,205,0.28)"/>
<path d="M488.00 713.80 L492.60 712.10 L497.20 713.80 L492.60 715.50 Z M492.60 709.20 L494.30 713.80 L492.60 718.40 L490.90 713.80 Z" fill="rgba(215,210,205,0.28)"/>
<path d="M538.40 713.80 L543.00 712.10 L547.60 713.80 L543.00 715.50 Z M543.00 709.20 L544.70 713.80 L543.00 718.40 L541.30 713.80 Z" fill="rgba(215,210,205,0.28)"/>
<path d="M565.80 713.80 L570.40 712.10 L575.00 713.80 L570.40 715.50 Z M570.40 709.20 L572.10 713.80 L570.40 718.40 L568.70 713.80 Z" fill="rgba(215,210,205,0.28)"/>
<path d="M305.70 759.20 L310.30 757.50 L314.90 759.20 L310.30 760.90 Z M310.30 754.60 L312.00 759.20 L310.30 763.80 L308.60 759.20 Z" fill="rgba(215,210,205,0.28)"/>
<path d="M333.40 759.20 L338.00 757.50 L342.60 759.20 L338.00 760.90 Z M338.00 754.60 L339.70 759.20 L338.00 763.80 L336.30 759.20 Z" fill="rgba(215,210,205,0.28)"/>
<path d="M384.00 759.20 L388.60 757.50 L393.20 759.20 L388.60 760.90 Z M388.60 754.60 L390.30 759.20 L388.60 763.80 L386.90 759.20 Z" fill="rgba(215,210,205,0.28)"/>
<path d="M411.60 759.20 L416.20 757.50 L420.80 759.20 L416.20 760.90 Z M416.20 754.60 L417.90 759.20 L416.20 763.80 L414.50 759.20 Z" fill="rgba(215,210,205,0.28)"/>
<path d="M460.60 759.20 L465.20 757.50 L469.80 759.20 L465.20 760.90 Z M465.20 754.60 L466.90 759.20 L465.20 763.80 L463.50 759.20 Z" fill="rgba(215,210,205,0.28)"/>
<path d="M488.00 759.20 L492.60 757.50 L497.20 759.20 L492.60 760.90 Z M492.60 754.60 L494.30 759.20 L492.60 763.80 L490.90 759.20 Z" fill="rgba(215,210,205,0.28)"/>
<path d="M538.40 759.20 L543.00 757.50 L547.60 759.20 L543.00 760.90 Z M543.00 754.60 L544.70 759.20 L543.00 763.80 L541.30 759.20 Z" fill="rgba(215,210,205,0.28)"/>
<path d="M565.80 759.20 L570.40 757.50 L575.00 759.20 L570.40 760.90 Z M570.40 754.60 L572.10 759.20 L570.40 763.80 L568.70 759.20 Z" fill="rgba(215,210,205,0.28)"/>
<path d="M305.70 790.50 L310.30 788.80 L314.90 790.50 L310.30 792.20 Z M310.30 785.90 L312.00 790.50 L310.30 795.10 L308.60 790.50 Z" fill="rgba(215,210,205,0.28)"/>
<path d="M333.40 790.50 L338.00 788.80 L342.60 790.50 L338.00 792.20 Z M338.00 785.90 L339.70 790.50 L338.00 795.10 L336.30 790.50 Z" fill="rgba(215,210,205,0.28)"/>
<path d="M384.00 790.50 L388.60 788.80 L393.20 790.50 L388.60 792.20 Z M388.60 785.90 L390.30 790.50 L388.60 795.10 L386.90 790.50 Z" fill="rgba(215,210,205,0.28)"/>
<path d="M411.60 790.50 L416.20 788.80 L420.80 790.50 L416.20 792.20 Z M416.20 785.90 L417.90 790.50 L416.20 795.10 L414.50 790.50 Z" fill="rgba(215,210,205,0.28)"/>
<path d="M460.60 790.50 L465.20 788.80 L469.80 790.50 L465.20 792.20 Z M465.20 785.90 L466.90 790.50 L465.20 795.10 L463.50 790.50 Z" fill="rgba(215,210,205,0.28)"/>
<path d="M488.00 790.50 L492.60 788.80 L497.20 790.50 L492.60 792.20 Z M492.60 785.90 L494.30 790.50 L492.60 795.10 L490.90 790.50 Z" fill="rgba(215,210,205,0.28)"/>
<path d="M538.40 790.50 L543.00 788.80 L547.60 790.50 L543.00 792.20 Z M543.00 785.90 L544.70 790.50 L543.00 795.10 L541.30 790.50 Z" fill="rgba(215,210,205,0.28)"/>
<path d="M565.80 790.50 L570.40 788.80 L575.00 790.50 L570.40 792.20 Z M570.40 785.90 L572.10 790.50 L570.40 795.10 L568.70 790.50 Z" fill="rgba(215,210,205,0.28)"/>
<path d="M305.70 835.90 L310.30 834.20 L314.90 835.90 L310.30 837.60 Z M310.30 831.30 L312.00 835.90 L310.30 840.50 L308.60 835.90 Z" fill="rgba(215,210,205,0.28)"/>
<path d="M333.40 835.90 L338.00 834.20 L342.60 835.90 L338.00 837.60 Z M338.00 831.30 L339.70 835.90 L338.00 840.50 L336.30 835.90 Z" fill="rgba(215,210,205,0.28)"/>
<path d="M384.00 835.90 L388.60 834.20 L393.20 835.90 L388.60 837.60 Z M388.60 831.30 L390.30 835.90 L388.60 840.50 L386.90 835.90 Z" fill="rgba(215,210,205,0.28)"/>
<path d="M411.60 835.90 L416.20 834.20 L420.80 835.90 L416.20 837.60 Z M416.20 831.30 L417.90 835.90 L416.20 840.50 L414.50 835.90 Z" fill="rgba(215,210,205,0.28)"/>
<path d="M460.60 835.90 L465.20 834.20 L469.80 835.90 L465.20 837.60 Z M465.20 831.30 L466.90 835.90 L465.20 840.50 L463.50 835.90 Z" fill="rgba(215,210,205,0.28)"/>
<path d="M488.00 835.90 L492.60 834.20 L497.20 835.90 L492.60 837.60 Z M492.60 831.30 L494.30 835.90 L492.60 840.50 L490.90 835.90 Z" fill="rgba(215,210,205,0.28)"/>
<path d="M538.40 835.90 L543.00 834.20 L547.60 835.90 L543.00 837.60 Z M543.00 831.30 L544.70 835.90 L543.00 840.50 L541.30 835.90 Z" fill="rgba(215,210,205,0.28)"/>
<path d="M565.80 835.90 L570.40 834.20 L575.00 835.90 L570.40 837.60 Z M570.40 831.30 L572.10 835.90 L570.40 840.50 L568.70 835.90 Z" fill="rgba(215,210,205,0.28)"/>
<path d="M305.70 867.20 L310.30 865.50 L314.90 867.20 L310.30 868.90 Z M310.30 862.60 L312.00 867.20 L310.30 871.80 L308.60 867.20 Z" fill="rgba(215,210,205,0.28)"/>
<path d="M333.40 867.20 L338.00 865.50 L342.60 867.20 L338.00 868.90 Z M338.00 862.60 L339.70 867.20 L338.00 871.80 L336.30 867.20 Z" fill="rgba(215,210,205,0.28)"/>
<path d="M384.00 867.20 L388.60 865.50 L393.20 867.20 L388.60 868.90 Z M388.60 862.60 L390.30 867.20 L388.60 871.80 L386.90 867.20 Z" fill="rgba(215,210,205,0.28)"/>
<path d="M411.60 867.20 L416.20 865.50 L420.80 867.20 L416.20 868.90 Z M416.20 862.60 L417.90 867.20 L416.20 871.80 L414.50 867.20 Z" fill="rgba(215,210,205,0.28)"/>
<path d="M460.60 867.20 L465.20 865.50 L469.80 867.20 L465.20 868.90 Z M465.20 862.60 L466.90 867.20 L465.20 871.80 L463.50 867.20 Z" fill="rgba(215,210,205,0.28)"/>
<path d="M488.00 867.20 L492.60 865.50 L497.20 867.20 L492.60 868.90 Z M492.60 862.60 L494.30 867.20 L492.60 871.80 L490.90 867.20 Z" fill="rgba(215,210,205,0.28)"/>
<path d="M538.40 867.20 L543.00 865.50 L547.60 867.20 L543.00 868.90 Z M543.00 862.60 L544.70 867.20 L543.00 871.80 L541.30 867.20 Z" fill="rgba(215,210,205,0.28)"/>
<path d="M565.80 867.20 L570.40 865.50 L575.00 867.20 L570.40 868.90 Z M570.40 862.60 L572.10 867.20 L570.40 871.80 L568.70 867.20 Z" fill="rgba(215,210,205,0.28)"/>
<path d="M305.70 912.50 L310.30 910.80 L314.90 912.50 L310.30 914.20 Z M310.30 907.90 L312.00 912.50 L310.30 917.10 L308.60 912.50 Z" fill="rgba(215,210,205,0.28)"/>
<path d="M333.40 912.50 L338.00 910.80 L342.60 912.50 L338.00 914.20 Z M338.00 907.90 L339.70 912.50 L338.00 917.10 L336.30 912.50 Z" fill="rgba(215,210,205,0.28)"/>
<path d="M384.00 912.50 L388.60 910.80 L393.20 912.50 L388.60 914.20 Z M388.60 907.90 L390.30 912.50 L388.60 917.10 L386.90 912.50 Z" fill="rgba(215,210,205,0.28)"/>
<path d="M411.60 912.50 L416.20 910.80 L420.80 912.50 L416.20 914.20 Z M416.20 907.90 L417.90 912.50 L416.20 917.10 L414.50 912.50 Z" fill="rgba(215,210,205,0.28)"/>
<path d="M460.60 912.50 L465.20 910.80 L469.80 912.50 L465.20 914.20 Z M465.20 907.90 L466.90 912.50 L465.20 917.10 L463.50 912.50 Z" fill="rgba(215,210,205,0.28)"/>
<path d="M488.00 912.50 L492.60 910.80 L497.20 912.50 L492.60 914.20 Z M492.60 907.90 L494.30 912.50 L492.60 917.10 L490.90 912.50 Z" fill="rgba(215,210,205,0.28)"/>
<path d="M538.40 912.50 L543.00 910.80 L547.60 912.50 L543.00 914.20 Z M543.00 907.90 L544.70 912.50 L543.00 917.10 L541.30 912.50 Z" fill="rgba(215,210,205,0.28)"/>
<path d="M565.80 912.50 L570.40 910.80 L575.00 912.50 L570.40 914.20 Z M570.40 907.90 L572.10 912.50 L570.40 917.10 L568.70 912.50 Z" fill="rgba(215,210,205,0.28)"/>
<path d="M305.70 943.80 L310.30 942.10 L314.90 943.80 L310.30 945.50 Z M310.30 939.20 L312.00 943.80 L310.30 948.40 L308.60 943.80 Z" fill="rgba(215,210,205,0.28)"/>
<path d="M333.40 943.80 L338.00 942.10 L342.60 943.80 L338.00 945.50 Z M338.00 939.20 L339.70 943.80 L338.00 948.40 L336.30 943.80 Z" fill="rgba(215,210,205,0.28)"/>
<path d="M384.00 943.80 L388.60 942.10 L393.20 943.80 L388.60 945.50 Z M388.60 939.20 L390.30 943.80 L388.60 948.40 L386.90 943.80 Z" fill="rgba(215,210,205,0.28)"/>
<path d="M411.60 943.80 L416.20 942.10 L420.80 943.80 L416.20 945.50 Z M416.20 939.20 L417.90 943.80 L416.20 948.40 L414.50 943.80 Z" fill="rgba(215,210,205,0.28)"/>
<path d="M460.60 943.80 L465.20 942.10 L469.80 943.80 L465.20 945.50 Z M465.20 939.20 L466.90 943.80 L465.20 948.40 L463.50 943.80 Z" fill="rgba(215,210,205,0.28)"/>
<path d="M488.00 943.80 L492.60 942.10 L497.20 943.80 L492.60 945.50 Z M492.60 939.20 L494.30 943.80 L492.60 948.40 L490.90 943.80 Z" fill="rgba(215,210,205,0.28)"/>
<path d="M538.40 943.80 L543.00 942.10 L547.60 943.80 L543.00 945.50 Z M543.00 939.20 L544.70 943.80 L543.00 948.40 L541.30 943.80 Z" fill="rgba(215,210,205,0.28)"/>
<path d="M565.80 943.80 L570.40 942.10 L575.00 943.80 L570.40 945.50 Z M570.40 939.20 L572.10 943.80 L570.40 948.40 L568.70 943.80 Z" fill="rgba(215,210,205,0.28)"/>
<path d="M570.4 108.4 L578.1999999999999 116.2 L570.4 124.0 L562.6 116.2 Z" fill="#525152" stroke="#e49a55" stroke-width="2.2"/>
<path d="M543 139.7 L550.8 147.5 L543 155.3 L535.2 147.5 Z" fill="#525152" stroke="#e49a55" stroke-width="2.2"/>
<path d="M492.6 184.99999999999997 L500.40000000000003 192.79999999999998 L492.6 200.6 L484.8 192.79999999999998 Z" fill="#525152" stroke="#e49a55" stroke-width="2.2"/>
<path d="M465.2 216.29999999999998 L473.0 224.1 L465.2 231.9 L457.4 224.1 Z" fill="#525152" stroke="#e49a55" stroke-width="2.2"/>
<path d="M570.4 338.2 L578.1999999999999 346.0 L570.4 353.8 L562.6 346.0 Z" fill="#525152" stroke="#e49a55" stroke-width="2.2"/>
<path d="M543 369.5 L550.8 377.3 L543 385.1 L535.2 377.3 Z" fill="#525152" stroke="#e49a55" stroke-width="2.2"/>
<path d="M570.4 675.2 L578.1999999999999 683.0 L570.4 690.8 L562.6 683.0 Z" fill="#525152" stroke="#e49a55" stroke-width="2.2"/>
<rect x="655" y="674.6999999999999" width="19.2" height="19.2" rx="2" fill="#e8892e"/>
<path d="M543 706.5000000000001 L550.8 714.3000000000001 L543 722.1 L535.2 714.3000000000001 Z" fill="#525152" stroke="#e49a55" stroke-width="2.2"/>
<rect x="655" y="706.0" width="19.2" height="19.2" rx="2" fill="#e8892e"/>
<path d="M570.4 751.9000000000001 L578.1999999999999 759.7 L570.4 767.5 L562.6 759.7 Z" fill="#525152" stroke="#e49a55" stroke-width="2.2"/>
<rect x="655" y="751.4" width="19.2" height="19.2" rx="2" fill="#e8892e"/>
<path d="M543 783.2 L550.8 791.0 L543 798.8 L535.2 791.0 Z" fill="#525152" stroke="#e49a55" stroke-width="2.2"/>
<rect x="655" y="782.6999999999999" width="19.2" height="19.2" rx="2" fill="#e8892e"/>
<path d="M492.6 828.6000000000001 L500.40000000000003 836.4000000000001 L492.6 844.2 L484.8 836.4000000000001 Z" fill="#525152" stroke="#e49a55" stroke-width="2.2"/>
<rect x="655" y="828.1" width="19.2" height="19.2" rx="2" fill="#e8892e"/>
<path d="M465.2 859.9000000000001 L473.0 867.7 L465.2 875.5 L457.4 867.7 Z" fill="#525152" stroke="#e49a55" stroke-width="2.2"/>
<rect x="655" y="859.4" width="19.2" height="19.2" rx="2" fill="#e8892e"/>
<path d="M570.4 905.2 L578.1999999999999 913.0 L570.4 920.8 L562.6 913.0 Z" fill="#525152" stroke="#e49a55" stroke-width="2.2"/>
<rect x="655" y="904.6999999999999" width="19.2" height="19.2" rx="2" fill="#e8892e"/>
<path d="M543 936.5000000000001 L550.8 944.3000000000001 L543 952.1 L535.2 944.3000000000001 Z" fill="#525152" stroke="#e49a55" stroke-width="2.2"/>
<rect x="655" y="936.0" width="19.2" height="19.2" rx="2" fill="#e8892e"/>
<rect x="301.5" y="519.8" width="17.6" height="17.6" rx="3" fill="none" stroke="#9a9a9a" stroke-width="1.6"/>
<rect x="329.2" y="519.8" width="17.6" height="17.6" rx="3" fill="none" stroke="#9a9a9a" stroke-width="1.6"/>
<rect x="379.8" y="519.8" width="17.6" height="17.6" rx="3" fill="none" stroke="#9a9a9a" stroke-width="1.6"/>
<rect x="407.4" y="519.8" width="17.6" height="17.6" rx="3" fill="none" stroke="#9a9a9a" stroke-width="1.6"/>
<rect x="455.9" y="519" width="18.6" height="19" rx="2" fill="#e8892e" fill-opacity="0.9"/>
<rect x="483.3" y="519" width="18.6" height="19" rx="2" fill="#e8892e" fill-opacity="0.9"/>
<rect x="533.7" y="519" width="18.6" height="19" rx="2" fill="#e8892e" fill-opacity="0.9"/>
<rect x="561.1" y="519" width="18.6" height="19" rx="2" fill="#e8892e" fill-opacity="0.9"/>
<rect x="316.5" y="506.79999999999995" width="7.5" height="5.2" rx="2.6" fill="none" stroke="#8a8a8a" stroke-width="1.2"/><rect x="323.0" y="506.79999999999995" width="7.5" height="5.2" rx="2.6" fill="none" stroke="#8a8a8a" stroke-width="1.2"/>
<rect x="394.5" y="506.79999999999995" width="7.5" height="5.2" rx="2.6" fill="none" stroke="#8a8a8a" stroke-width="1.2"/><rect x="401.0" y="506.79999999999995" width="7.5" height="5.2" rx="2.6" fill="none" stroke="#8a8a8a" stroke-width="1.2"/>
<rect x="471.5" y="506.79999999999995" width="7.5" height="5.2" rx="2.6" fill="none" stroke="#e8892e" stroke-width="1.2"/><rect x="478.0" y="506.79999999999995" width="7.5" height="5.2" rx="2.6" fill="none" stroke="#e8892e" stroke-width="1.2"/>
<rect x="549.5" y="506.79999999999995" width="7.5" height="5.2" rx="2.6" fill="none" stroke="#e8892e" stroke-width="1.2"/><rect x="556.0" y="506.79999999999995" width="7.5" height="5.2" rx="2.6" fill="none" stroke="#e8892e" stroke-width="1.2"/>
<path d="M771.5 75.5 L780.5 75.5 L776 81.5 Z" fill="#eeeeee"/>
<rect x="682" y="109.5" width="16" height="16" rx="2.5" fill="none" stroke="#767676" stroke-width="1.5"/>
<path d="M774 115.5 L780 115.5 L777 111.5 Z" fill="#5e5e5e"/><path d="M774 119.5 L780 119.5 L777 123.5 Z" fill="#5e5e5e"/>
<rect x="681.5" y="140.3" width="17" height="17" rx="3" fill="#f4f4f4"/><path d="M690 143.8 V153.8 M685 148.8 H695" stroke="#222" stroke-width="2.4"/>
<path d="M774 146.8 L780 146.8 L777 142.8 Z" fill="#7c7c7c"/><path d="M774 150.8 L780 150.8 L777 154.8 Z" fill="#eeeeee"/>
<rect x="682" y="186.1" width="16" height="16" rx="2.5" fill="none" stroke="#767676" stroke-width="1.5"/>
<path d="M774 192.1 L780 192.1 L777 188.1 Z" fill="#5e5e5e"/><path d="M774 196.1 L780 196.1 L777 200.1 Z" fill="#5e5e5e"/>
<rect x="682" y="217.4" width="16" height="16" rx="2.5" fill="none" stroke="#767676" stroke-width="1.5"/>
<path d="M774 223.4 L780 223.4 L777 219.4 Z" fill="#5e5e5e"/><path d="M774 227.4 L780 227.4 L777 231.4 Z" fill="#5e5e5e"/>
<rect x="682" y="262.7" width="16" height="16" rx="2.5" fill="none" stroke="#767676" stroke-width="1.5"/>
<path d="M774 268.7 L780 268.7 L777 264.7 Z" fill="#5e5e5e"/><path d="M774 272.7 L780 272.7 L777 276.7 Z" fill="#5e5e5e"/>
<rect x="682" y="294" width="16" height="16" rx="2.5" fill="none" stroke="#767676" stroke-width="1.5"/>
<path d="M774 300 L780 300 L777 296 Z" fill="#5e5e5e"/><path d="M774 304 L780 304 L777 308 Z" fill="#5e5e5e"/>
<rect x="682" y="339.3" width="16" height="16" rx="2.5" fill="none" stroke="#767676" stroke-width="1.5"/>
<path d="M774 345.3 L780 345.3 L777 341.3 Z" fill="#5e5e5e"/><path d="M774 349.3 L780 349.3 L777 353.3 Z" fill="#5e5e5e"/>
<rect x="681.5" y="370.1" width="17" height="17" rx="3" fill="#f4f4f4"/><path d="M690 373.6 V383.6 M685 378.6 H695" stroke="#222" stroke-width="2.4"/>
<path d="M774 376.6 L780 376.6 L777 372.6 Z" fill="#7c7c7c"/><path d="M774 380.6 L780 380.6 L777 384.6 Z" fill="#eeeeee"/>
<path d="M801 148.8 H891.5 V378.6 H801" stroke="#8a8a8a" stroke-width="1.6" fill="none"/>
<rect x="853.0" y="237" width="75.5" height="23.5" fill="#9b3340" stroke="#2a1a1a" stroke-width="1"/>
<path d="M743 453.5 L749 453.5 L746 449.5 Z" fill="#777"/><path d="M743 457.5 L749 457.5 L746 461.5 Z" fill="#eee"/>
<rect x="766.6" y="447.6" width="43" height="16.2" fill="#2a3020"/>
<rect x="766.60" y="447.6" width="4.30" height="16.2" fill="#4a9038"/>
<rect x="766.80" y="447.6" width="2.49" height="16.2" fill="#80c464"/>
<rect x="770.90" y="447.6" width="4.30" height="16.2" fill="#4a9038"/>
<rect x="771.10" y="447.6" width="2.49" height="16.2" fill="#7cc060"/>
<rect x="775.20" y="447.6" width="4.30" height="16.2" fill="#4a9038"/>
<rect x="775.40" y="447.6" width="2.49" height="16.2" fill="#80c464"/>
<rect x="779.50" y="447.6" width="4.30" height="16.2" fill="#4a9038"/>
<rect x="779.70" y="447.6" width="2.49" height="16.2" fill="#7cc060"/>
<rect x="783.80" y="447.6" width="4.30" height="16.2" fill="#a09428"/>
<rect x="784.00" y="447.6" width="2.49" height="16.2" fill="#dcd454"/>
<rect x="788.10" y="447.6" width="4.30" height="16.2" fill="#a09428"/>
<rect x="788.30" y="447.6" width="2.49" height="16.2" fill="#d8d050"/>
<rect x="792.40" y="447.6" width="4.30" height="16.2" fill="#a09428"/>
<rect x="792.60" y="447.6" width="2.49" height="16.2" fill="#dcd454"/>
<rect x="796.70" y="447.6" width="4.30" height="16.2" fill="#9a302c"/>
<rect x="796.90" y="447.6" width="2.49" height="16.2" fill="#cc3c40"/>
<rect x="801.00" y="447.6" width="4.30" height="16.2" fill="#4e1c24"/>
<rect x="801.20" y="447.6" width="2.49" height="16.2" fill="#5c2028"/>
<rect x="805.30" y="447.6" width="4.30" height="16.2" fill="#4e1c24"/>
<rect x="805.50" y="447.6" width="2.49" height="16.2" fill="#5c2028"/>
<path d="M1200.8 75.5 L1209.8 75.5 L1205.3 81.5 Z" fill="#eeeeee"/>
<rect x="1110.8" y="109.0" width="17" height="17" rx="3" fill="#f4f4f4"/><path d="M1119.3 112.5 V122.5 M1114.3 117.5 H1124.3" stroke="#222" stroke-width="2.4"/>
<path d="M1203.3 115.5 L1209.3 115.5 L1206.3 111.5 Z" fill="#7c7c7c"/><path d="M1203.3 119.5 L1209.3 119.5 L1206.3 123.5 Z" fill="#eeeeee"/>
<rect x="1111.3" y="140.8" width="16" height="16" rx="2.5" fill="none" stroke="#767676" stroke-width="1.5"/>
<path d="M1203.3 146.8 L1209.3 146.8 L1206.3 142.8 Z" fill="#5e5e5e"/><path d="M1203.3 150.8 L1209.3 150.8 L1206.3 154.8 Z" fill="#5e5e5e"/>
<rect x="1111.3" y="186.1" width="16" height="16" rx="2.5" fill="none" stroke="#767676" stroke-width="1.5"/>
<path d="M1203.3 192.1 L1209.3 192.1 L1206.3 188.1 Z" fill="#5e5e5e"/><path d="M1203.3 196.1 L1209.3 196.1 L1206.3 200.1 Z" fill="#5e5e5e"/>
<rect x="1111.3" y="217.4" width="16" height="16" rx="2.5" fill="none" stroke="#767676" stroke-width="1.5"/>
<path d="M1203.3 223.4 L1209.3 223.4 L1206.3 219.4 Z" fill="#5e5e5e"/><path d="M1203.3 227.4 L1209.3 227.4 L1206.3 231.4 Z" fill="#5e5e5e"/>
<rect x="1111.3" y="262.7" width="16" height="16" rx="2.5" fill="none" stroke="#767676" stroke-width="1.5"/>
<path d="M1203.3 268.7 L1209.3 268.7 L1206.3 264.7 Z" fill="#5e5e5e"/><path d="M1203.3 272.7 L1209.3 272.7 L1206.3 276.7 Z" fill="#5e5e5e"/>
<rect x="1111.3" y="294" width="16" height="16" rx="2.5" fill="none" stroke="#767676" stroke-width="1.5"/>
<path d="M1203.3 300 L1209.3 300 L1206.3 296 Z" fill="#5e5e5e"/><path d="M1203.3 304 L1209.3 304 L1206.3 308 Z" fill="#5e5e5e"/>
<rect x="1110.8" y="338.8" width="17" height="17" rx="3" fill="#f4f4f4"/><path d="M1119.3 342.3 V352.3 M1114.3 347.3 H1124.3" stroke="#222" stroke-width="2.4"/>
<path d="M1203.3 345.3 L1209.3 345.3 L1206.3 341.3 Z" fill="#7c7c7c"/><path d="M1203.3 349.3 L1209.3 349.3 L1206.3 353.3 Z" fill="#eeeeee"/>
<rect x="1111.3" y="370.6" width="16" height="16" rx="2.5" fill="none" stroke="#767676" stroke-width="1.5"/>
<path d="M1203.3 376.6 L1209.3 376.6 L1206.3 372.6 Z" fill="#5e5e5e"/><path d="M1203.3 380.6 L1209.3 380.6 L1206.3 384.6 Z" fill="#5e5e5e"/>
<path d="M1230.3 117.5 H1320.8 V347.3 H1230.3" stroke="#8a8a8a" stroke-width="1.6" fill="none"/>
<rect x="1282.3" y="237" width="75.5" height="23.5" fill="#9b3340" stroke="#2a1a1a" stroke-width="1"/>
<path d="M1172.3 453.5 L1178.3 453.5 L1175.3 449.5 Z" fill="#777"/><path d="M1172.3 457.5 L1178.3 457.5 L1175.3 461.5 Z" fill="#eee"/>
<rect x="1195.9" y="447.6" width="43" height="16.2" fill="#2a3020"/>
<rect x="1195.90" y="447.6" width="4.30" height="16.2" fill="#4a9038"/>
<rect x="1196.10" y="447.6" width="2.49" height="16.2" fill="#80c464"/>
<rect x="1200.20" y="447.6" width="4.30" height="16.2" fill="#4a9038"/>
<rect x="1200.40" y="447.6" width="2.49" height="16.2" fill="#7cc060"/>
<rect x="1204.50" y="447.6" width="4.30" height="16.2" fill="#4a9038"/>
<rect x="1204.70" y="447.6" width="2.49" height="16.2" fill="#80c464"/>
<rect x="1208.80" y="447.6" width="4.30" height="16.2" fill="#4a9038"/>
<rect x="1209.00" y="447.6" width="2.49" height="16.2" fill="#7cc060"/>
<rect x="1213.10" y="447.6" width="4.30" height="16.2" fill="#a09428"/>
<rect x="1213.30" y="447.6" width="2.49" height="16.2" fill="#dcd454"/>
<rect x="1217.40" y="447.6" width="4.30" height="16.2" fill="#a09428"/>
<rect x="1217.60" y="447.6" width="2.49" height="16.2" fill="#d8d050"/>
<rect x="1221.70" y="447.6" width="4.30" height="16.2" fill="#a09428"/>
<rect x="1221.90" y="447.6" width="2.49" height="16.2" fill="#dcd454"/>
<rect x="1226.00" y="447.6" width="4.30" height="16.2" fill="#9a302c"/>
<rect x="1226.20" y="447.6" width="2.49" height="16.2" fill="#cc3c40"/>
<rect x="1230.30" y="447.6" width="4.30" height="16.2" fill="#4e1c24"/>
<rect x="1230.50" y="447.6" width="2.49" height="16.2" fill="#5c2028"/>
<rect x="1234.60" y="447.6" width="4.30" height="16.2" fill="#4e1c24"/>
<rect x="1234.80" y="447.6" width="2.49" height="16.2" fill="#5c2028"/>
<circle cx="754.7" cy="642" r="11.3" fill="none" stroke="#b8b8b8" stroke-width="2.6"/><circle cx="754.7" cy="642" r="4.8" fill="none" stroke="#e08a3c" stroke-width="2.9"/>
<circle cx="796.2" cy="642" r="4.8" fill="none" stroke="#b8b8b8" stroke-width="2.8"/>
<path d="M794.6 630.8 A11.3 11.3 0 0 0 794.6 653.2" stroke="#e08a3c" stroke-width="2.6" fill="none"/>
<path d="M797.8000000000001 630.8 A11.3 11.3 0 0 1 797.8000000000001 653.2" stroke="#b8b8b8" stroke-width="2.6" fill="none"/>
<circle cx="838.1" cy="642" r="4.8" fill="none" stroke="#b8b8b8" stroke-width="2.8"/>
<path d="M836.5 630.8 A11.3 11.3 0 0 0 836.5 653.2" stroke="#b8b8b8" stroke-width="2.6" fill="none"/>
<path d="M839.7 630.8 A11.3 11.3 0 0 1 839.7 653.2" stroke="#e08a3c" stroke-width="2.6" fill="none"/>
<rect x="748.4" y="675.6999999999999" width="15.2" height="15.2" rx="2.5" fill="#1f1f1f" stroke="#6c6c6c" stroke-width="1.6"/>
<path d="M751.7 683.5 L754.8 686.5 L760.5 679.6999999999999" stroke="#f0f0f0" stroke-width="2.5" fill="none"/>
<rect x="787.4" y="675.6999999999999" width="15.2" height="15.2" rx="2.5" fill="#1f1f1f" stroke="#6c6c6c" stroke-width="1.6"/>
<path d="M790.7 683.5 L793.8 686.5 L799.5 679.6999999999999" stroke="#f0f0f0" stroke-width="2.5" fill="none"/>
<rect x="826.9" y="675.6999999999999" width="15.2" height="15.2" rx="2.5" fill="#1f1f1f" stroke="#6c6c6c" stroke-width="1.6"/>
<rect x="748.4" y="707.0" width="15.2" height="15.2" rx="2.5" fill="#1f1f1f" stroke="#6c6c6c" stroke-width="1.6"/>
<path d="M751.7 714.8000000000001 L754.8 717.8000000000001 L760.5 711.0" stroke="#f0f0f0" stroke-width="2.5" fill="none"/>
<rect x="787.4" y="707.0" width="15.2" height="15.2" rx="2.5" fill="#1f1f1f" stroke="#6c6c6c" stroke-width="1.6"/>
<path d="M790.7 714.8000000000001 L793.8 717.8000000000001 L799.5 711.0" stroke="#f0f0f0" stroke-width="2.5" fill="none"/>
<rect x="826.9" y="707.0" width="15.2" height="15.2" rx="2.5" fill="#1f1f1f" stroke="#6c6c6c" stroke-width="1.6"/>
<rect x="748.4" y="752.4" width="15.2" height="15.2" rx="2.5" fill="#1f1f1f" stroke="#6c6c6c" stroke-width="1.6"/>
<path d="M751.7 760.2 L754.8 763.2 L760.5 756.4" stroke="#f0f0f0" stroke-width="2.5" fill="none"/>
<rect x="787.4" y="752.4" width="15.2" height="15.2" rx="2.5" fill="#1f1f1f" stroke="#6c6c6c" stroke-width="1.6"/>
<path d="M790.7 760.2 L793.8 763.2 L799.5 756.4" stroke="#f0f0f0" stroke-width="2.5" fill="none"/>
<rect x="826.9" y="752.4" width="15.2" height="15.2" rx="2.5" fill="#1f1f1f" stroke="#6c6c6c" stroke-width="1.6"/>
<rect x="748.4" y="783.6999999999999" width="15.2" height="15.2" rx="2.5" fill="#1f1f1f" stroke="#6c6c6c" stroke-width="1.6"/>
<path d="M751.7 791.5 L754.8 794.5 L760.5 787.6999999999999" stroke="#f0f0f0" stroke-width="2.5" fill="none"/>
<rect x="787.4" y="783.6999999999999" width="15.2" height="15.2" rx="2.5" fill="#1f1f1f" stroke="#6c6c6c" stroke-width="1.6"/>
<path d="M790.7 791.5 L793.8 794.5 L799.5 787.6999999999999" stroke="#f0f0f0" stroke-width="2.5" fill="none"/>
<rect x="826.9" y="783.6999999999999" width="15.2" height="15.2" rx="2.5" fill="#1f1f1f" stroke="#6c6c6c" stroke-width="1.6"/>
<rect x="748.4" y="829.1" width="15.2" height="15.2" rx="2.5" fill="#1f1f1f" stroke="#6c6c6c" stroke-width="1.6"/>
<path d="M751.7 836.9000000000001 L754.8 839.9000000000001 L760.5 833.1" stroke="#f0f0f0" stroke-width="2.5" fill="none"/>
<rect x="787.4" y="829.1" width="15.2" height="15.2" rx="2.5" fill="#1f1f1f" stroke="#6c6c6c" stroke-width="1.6"/>
<rect x="826.9" y="829.1" width="15.2" height="15.2" rx="2.5" fill="#1f1f1f" stroke="#6c6c6c" stroke-width="1.6"/>
<path d="M830.2 836.9000000000001 L833.3 839.9000000000001 L839.0 833.1" stroke="#f0f0f0" stroke-width="2.5" fill="none"/>
<rect x="748.4" y="860.4" width="15.2" height="15.2" rx="2.5" fill="#1f1f1f" stroke="#6c6c6c" stroke-width="1.6"/>
<path d="M751.7 868.2 L754.8 871.2 L760.5 864.4" stroke="#f0f0f0" stroke-width="2.5" fill="none"/>
<rect x="787.4" y="860.4" width="15.2" height="15.2" rx="2.5" fill="#1f1f1f" stroke="#6c6c6c" stroke-width="1.6"/>
<rect x="826.9" y="860.4" width="15.2" height="15.2" rx="2.5" fill="#1f1f1f" stroke="#6c6c6c" stroke-width="1.6"/>
<path d="M830.2 868.2 L833.3 871.2 L839.0 864.4" stroke="#f0f0f0" stroke-width="2.5" fill="none"/>
<rect x="748.4" y="905.6999999999999" width="15.2" height="15.2" rx="2.5" fill="#1f1f1f" stroke="#6c6c6c" stroke-width="1.6"/>
<path d="M751.7 913.5 L754.8 916.5 L760.5 909.6999999999999" stroke="#f0f0f0" stroke-width="2.5" fill="none"/>
<rect x="787.4" y="905.6999999999999" width="15.2" height="15.2" rx="2.5" fill="#1f1f1f" stroke="#6c6c6c" stroke-width="1.6"/>
<rect x="826.9" y="905.6999999999999" width="15.2" height="15.2" rx="2.5" fill="#1f1f1f" stroke="#6c6c6c" stroke-width="1.6"/>
<rect x="748.4" y="937.0" width="15.2" height="15.2" rx="2.5" fill="#1f1f1f" stroke="#6c6c6c" stroke-width="1.6"/>
<path d="M751.7 944.8000000000001 L754.8 947.8000000000001 L760.5 941.0" stroke="#f0f0f0" stroke-width="2.5" fill="none"/>
<rect x="787.4" y="937.0" width="15.2" height="15.2" rx="2.5" fill="#1f1f1f" stroke="#6c6c6c" stroke-width="1.6"/>
<rect x="826.9" y="937.0" width="15.2" height="15.2" rx="2.5" fill="#1f1f1f" stroke="#6c6c6c" stroke-width="1.6"/>
<rect x="889.9000000000001" y="636.5" width="9.6" height="9.6" rx="2" fill="#2c2c2c"/>
<rect x="1099.2" y="636.5" width="9.6" height="9.6" rx="2" fill="#2c2c2c"/>
<rect x="890.3000000000001" y="679.9" width="8.8" height="8.8" rx="2" fill="#e8923c" stroke="#3a3028" stroke-width="1.7"/>
<path d="M1026 682.3 L1032 682.3 L1029 678.3 Z" fill="#eee"/><path d="M1026 686.3 L1032 686.3 L1029 690.3 Z" fill="#eee"/>
<rect x="1099.6" y="679.9" width="8.8" height="8.8" rx="2" fill="#e8923c" stroke="#3a3028" stroke-width="1.7"/>
<rect x="1133" y="676.0999999999999" width="16.4" height="16.4" rx="3" fill="#f2f2f2"/>
<path d="M1136.5 684.3 H1145.5" stroke="#222" stroke-width="2.8"/>
<rect x="890.3000000000001" y="711.2" width="8.8" height="8.8" rx="2" fill="#e8923c" stroke="#3a3028" stroke-width="1.7"/>
<path d="M1026 713.6 L1032 713.6 L1029 709.6 Z" fill="#eee"/><path d="M1026 717.6 L1032 717.6 L1029 721.6 Z" fill="#eee"/>
<rect x="1099.6" y="711.2" width="8.8" height="8.8" rx="2" fill="#e8923c" stroke="#3a3028" stroke-width="1.7"/>
<rect x="1133" y="707.4" width="16.4" height="16.4" rx="3" fill="#f2f2f2"/>
<path d="M1136.5 715.6 H1145.5" stroke="#222" stroke-width="2.8"/>
<rect x="890.3000000000001" y="756.6" width="8.8" height="8.8" rx="2" fill="#e8923c" stroke="#3a3028" stroke-width="1.7"/>
<path d="M1026 759 L1032 759 L1029 755 Z" fill="#eee"/><path d="M1026 763 L1032 763 L1029 767 Z" fill="#eee"/>
<rect x="1099.2" y="756.2" width="9.6" height="9.6" rx="2" fill="#2c2c2c"/>
<rect x="1133" y="752.8" width="16.4" height="16.4" rx="3" fill="#f2f2f2"/>
<path d="M1141.2 756.2 V765.8 M1136.4 761 H1146" stroke="#222" stroke-width="2.4"/>
<rect x="890.3000000000001" y="787.9" width="8.8" height="8.8" rx="2" fill="#e8923c" stroke="#3a3028" stroke-width="1.7"/>
<path d="M1026 790.3 L1032 790.3 L1029 786.3 Z" fill="#eee"/><path d="M1026 794.3 L1032 794.3 L1029 798.3 Z" fill="#eee"/>
<rect x="1099.2" y="787.5" width="9.6" height="9.6" rx="2" fill="#2c2c2c"/>
<rect x="1133" y="784.0999999999999" width="16.4" height="16.4" rx="3" fill="#f2f2f2"/>
<path d="M1141.2 787.5 V797.0999999999999 M1136.4 792.3 H1146" stroke="#222" stroke-width="2.4"/>
<rect x="889.9000000000001" y="832.9000000000001" width="9.6" height="9.6" rx="2" fill="#2c2c2c"/>
<path d="M1026 835.7 L1032 835.7 L1029 831.7 Z" fill="#eee"/><path d="M1026 839.7 L1032 839.7 L1029 843.7 Z" fill="#666"/>
<rect x="1099.2" y="832.9000000000001" width="9.6" height="9.6" rx="2" fill="#2c2c2c"/>
<rect x="1133" y="829.5" width="16.4" height="16.4" rx="3" fill="#f2f2f2"/>
<path d="M1141.2 832.9000000000001 V842.5 M1136.4 837.7 H1146" stroke="#222" stroke-width="2.4"/>
<rect x="889.9000000000001" y="864.2" width="9.6" height="9.6" rx="2" fill="#2c2c2c"/>
<path d="M1026 867 L1032 867 L1029 863 Z" fill="#eee"/><path d="M1026 871 L1032 871 L1029 875 Z" fill="#666"/>
<rect x="1099.2" y="864.2" width="9.6" height="9.6" rx="2" fill="#2c2c2c"/>
<rect x="1133" y="860.8" width="16.4" height="16.4" rx="3" fill="#f2f2f2"/>
<path d="M1141.2 864.2 V873.8 M1136.4 869 H1146" stroke="#222" stroke-width="2.4"/>
<rect x="889.9000000000001" y="909.5" width="9.6" height="9.6" rx="2" fill="#2c2c2c"/>
<path d="M1026 912.3 L1032 912.3 L1029 908.3 Z" fill="#eee"/><path d="M1026 916.3 L1032 916.3 L1029 920.3 Z" fill="#666"/>
<rect x="1099.2" y="909.5" width="9.6" height="9.6" rx="2" fill="#2c2c2c"/>
<rect x="1133" y="906.0999999999999" width="16.4" height="16.4" rx="3" fill="#f2f2f2"/>
<path d="M1141.2 909.5 V919.0999999999999 M1136.4 914.3 H1146" stroke="#222" stroke-width="2.4"/>
<rect x="889.9000000000001" y="940.8000000000001" width="9.6" height="9.6" rx="2" fill="#2c2c2c"/>
<path d="M1026 943.6 L1032 943.6 L1029 939.6 Z" fill="#eee"/><path d="M1026 947.6 L1032 947.6 L1029 951.6 Z" fill="#666"/>
<rect x="1099.2" y="940.8000000000001" width="9.6" height="9.6" rx="2" fill="#2c2c2c"/>
<rect x="1133" y="937.4" width="16.4" height="16.4" rx="3" fill="#f2f2f2"/>
<path d="M1141.2 940.8000000000001 V950.4 M1136.4 945.6 H1146" stroke="#222" stroke-width="2.4"/>
<circle cx="1245.4" cy="684.3" r="10.2" fill="#1e1e1f" stroke="#cc8850" stroke-width="1.9"/>
<circle cx="1478" cy="684.3" r="12" fill="#f2f2f2"/>
<path d="M1472.3 681.9 H1474.6 L1478.3 678.3 V690.3 L1474.6 686.6999999999999 H1472.3 Z" fill="#1e1e1e"/><path d="M1479.6 678.5 A5.4 5.8 0 0 1 1479.6 690.0999999999999 Z" fill="#c4c4c4"/><path d="M1479.6 678.5 A5.4 5.8 0 0 1 1479.6 690.0999999999999" fill="none" stroke="#3c3c3c" stroke-width="1.6"/>
<rect x="1540.8" y="676.1999999999999" width="42.8" height="16.3" fill="#2a3020"/>
<rect x="1540.80" y="676.1999999999999" width="4.28" height="16.3" fill="#4a9038"/>
<rect x="1541.00" y="676.1999999999999" width="2.48" height="16.3" fill="#80c464"/>
<rect x="1545.08" y="676.1999999999999" width="4.28" height="16.3" fill="#4a9038"/>
<rect x="1545.28" y="676.1999999999999" width="2.48" height="16.3" fill="#7cc060"/>
<rect x="1549.36" y="676.1999999999999" width="4.28" height="16.3" fill="#4a9038"/>
<rect x="1549.56" y="676.1999999999999" width="2.48" height="16.3" fill="#80c464"/>
<rect x="1553.64" y="676.1999999999999" width="4.28" height="16.3" fill="#4a9038"/>
<rect x="1553.84" y="676.1999999999999" width="2.48" height="16.3" fill="#7cc060"/>
<rect x="1557.92" y="676.1999999999999" width="4.28" height="16.3" fill="#a09428"/>
<rect x="1558.12" y="676.1999999999999" width="2.48" height="16.3" fill="#dcd454"/>
<rect x="1562.20" y="676.1999999999999" width="4.28" height="16.3" fill="#a09428"/>
<rect x="1562.40" y="676.1999999999999" width="2.48" height="16.3" fill="#d8d050"/>
<rect x="1566.48" y="676.1999999999999" width="4.28" height="16.3" fill="#a09428"/>
<rect x="1566.68" y="676.1999999999999" width="2.48" height="16.3" fill="#dcd454"/>
<rect x="1570.76" y="676.1999999999999" width="4.28" height="16.3" fill="#9a302c"/>
<rect x="1570.96" y="676.1999999999999" width="2.48" height="16.3" fill="#cc3c40"/>
<rect x="1575.04" y="676.1999999999999" width="4.28" height="16.3" fill="#4e1c24"/>
<rect x="1575.24" y="676.1999999999999" width="2.48" height="16.3" fill="#5c2028"/>
<rect x="1579.32" y="676.1999999999999" width="4.28" height="16.3" fill="#4e1c24"/>
<rect x="1579.52" y="676.1999999999999" width="2.48" height="16.3" fill="#5c2028"/>
<circle cx="1245.4" cy="715.6" r="10.2" fill="#1e1e1f" stroke="#cc8850" stroke-width="1.9"/>
<circle cx="1478" cy="715.6" r="12" fill="#f2f2f2"/>
<path d="M1472.3 713.2 H1474.6 L1478.3 709.6 V721.6 L1474.6 718.0 H1472.3 Z" fill="#1e1e1e"/><path d="M1479.6 709.8000000000001 A5.4 5.8 0 0 1 1479.6 721.4 Z" fill="#c4c4c4"/><path d="M1479.6 709.8000000000001 A5.4 5.8 0 0 1 1479.6 721.4" fill="none" stroke="#3c3c3c" stroke-width="1.6"/>
<rect x="1540.8" y="707.5" width="42.8" height="16.3" fill="#2a3020"/>
<rect x="1540.80" y="707.5" width="4.28" height="16.3" fill="#4a9038"/>
<rect x="1541.00" y="707.5" width="2.48" height="16.3" fill="#80c464"/>
<rect x="1545.08" y="707.5" width="4.28" height="16.3" fill="#4a9038"/>
<rect x="1545.28" y="707.5" width="2.48" height="16.3" fill="#7cc060"/>
<rect x="1549.36" y="707.5" width="4.28" height="16.3" fill="#4a9038"/>
<rect x="1549.56" y="707.5" width="2.48" height="16.3" fill="#80c464"/>
<rect x="1553.64" y="707.5" width="4.28" height="16.3" fill="#4a9038"/>
<rect x="1553.84" y="707.5" width="2.48" height="16.3" fill="#7cc060"/>
<rect x="1557.92" y="707.5" width="4.28" height="16.3" fill="#a09428"/>
<rect x="1558.12" y="707.5" width="2.48" height="16.3" fill="#dcd454"/>
<rect x="1562.20" y="707.5" width="4.28" height="16.3" fill="#a09428"/>
<rect x="1562.40" y="707.5" width="2.48" height="16.3" fill="#d8d050"/>
<rect x="1566.48" y="707.5" width="4.28" height="16.3" fill="#a09428"/>
<rect x="1566.68" y="707.5" width="2.48" height="16.3" fill="#dcd454"/>
<rect x="1570.76" y="707.5" width="4.28" height="16.3" fill="#9a302c"/>
<rect x="1570.96" y="707.5" width="2.48" height="16.3" fill="#cc3c40"/>
<rect x="1575.04" y="707.5" width="4.28" height="16.3" fill="#4e1c24"/>
<rect x="1575.24" y="707.5" width="2.48" height="16.3" fill="#5c2028"/>
<rect x="1579.32" y="707.5" width="4.28" height="16.3" fill="#4e1c24"/>
<rect x="1579.52" y="707.5" width="2.48" height="16.3" fill="#5c2028"/>
<circle cx="1245.4" cy="761" r="10.2" fill="#1e1e1f" stroke="#cc8850" stroke-width="1.9"/>
<circle cx="1478" cy="761" r="12" fill="#f2f2f2"/>
<path d="M1472.3 758.6 H1474.6 L1478.3 755 V767 L1474.6 763.4 H1472.3 Z" fill="#1e1e1e"/><path d="M1479.6 755.2 A5.4 5.8 0 0 1 1479.6 766.8 Z" fill="#c4c4c4"/><path d="M1479.6 755.2 A5.4 5.8 0 0 1 1479.6 766.8" fill="none" stroke="#3c3c3c" stroke-width="1.6"/>
<rect x="1540.8" y="752.9" width="42.8" height="16.3" fill="#2a3020"/>
<rect x="1540.80" y="752.9" width="4.28" height="16.3" fill="#4a9038"/>
<rect x="1541.00" y="752.9" width="2.48" height="16.3" fill="#80c464"/>
<rect x="1545.08" y="752.9" width="4.28" height="16.3" fill="#4a9038"/>
<rect x="1545.28" y="752.9" width="2.48" height="16.3" fill="#7cc060"/>
<rect x="1549.36" y="752.9" width="4.28" height="16.3" fill="#4a9038"/>
<rect x="1549.56" y="752.9" width="2.48" height="16.3" fill="#80c464"/>
<rect x="1553.64" y="752.9" width="4.28" height="16.3" fill="#4a9038"/>
<rect x="1553.84" y="752.9" width="2.48" height="16.3" fill="#7cc060"/>
<rect x="1557.92" y="752.9" width="4.28" height="16.3" fill="#a09428"/>
<rect x="1558.12" y="752.9" width="2.48" height="16.3" fill="#dcd454"/>
<rect x="1562.20" y="752.9" width="4.28" height="16.3" fill="#a09428"/>
<rect x="1562.40" y="752.9" width="2.48" height="16.3" fill="#d8d050"/>
<rect x="1566.48" y="752.9" width="4.28" height="16.3" fill="#a09428"/>
<rect x="1566.68" y="752.9" width="2.48" height="16.3" fill="#dcd454"/>
<rect x="1570.76" y="752.9" width="4.28" height="16.3" fill="#7a2a2c"/>
<rect x="1570.96" y="752.9" width="2.48" height="16.3" fill="#a8383a"/>
<rect x="1575.04" y="752.9" width="4.28" height="16.3" fill="#4e1c24"/>
<rect x="1575.24" y="752.9" width="2.48" height="16.3" fill="#5c2028"/>
<rect x="1579.32" y="752.9" width="4.28" height="16.3" fill="#4e1c24"/>
<rect x="1579.52" y="752.9" width="2.48" height="16.3" fill="#5c2028"/>
<circle cx="1245.4" cy="792.3" r="10.2" fill="#1e1e1f" stroke="#cc8850" stroke-width="1.9"/>
<circle cx="1478" cy="792.3" r="12" fill="#f2f2f2"/>
<path d="M1472.3 789.9 H1474.6 L1478.3 786.3 V798.3 L1474.6 794.6999999999999 H1472.3 Z" fill="#1e1e1e"/><path d="M1479.6 786.5 A5.4 5.8 0 0 1 1479.6 798.0999999999999 Z" fill="#c4c4c4"/><path d="M1479.6 786.5 A5.4 5.8 0 0 1 1479.6 798.0999999999999" fill="none" stroke="#3c3c3c" stroke-width="1.6"/>
<rect x="1540.8" y="784.1999999999999" width="42.8" height="16.3" fill="#2a3020"/>
<rect x="1540.80" y="784.1999999999999" width="4.28" height="16.3" fill="#4a9038"/>
<rect x="1541.00" y="784.1999999999999" width="2.48" height="16.3" fill="#80c464"/>
<rect x="1545.08" y="784.1999999999999" width="4.28" height="16.3" fill="#4a9038"/>
<rect x="1545.28" y="784.1999999999999" width="2.48" height="16.3" fill="#7cc060"/>
<rect x="1549.36" y="784.1999999999999" width="4.28" height="16.3" fill="#4a9038"/>
<rect x="1549.56" y="784.1999999999999" width="2.48" height="16.3" fill="#80c464"/>
<rect x="1553.64" y="784.1999999999999" width="4.28" height="16.3" fill="#4a9038"/>
<rect x="1553.84" y="784.1999999999999" width="2.48" height="16.3" fill="#7cc060"/>
<rect x="1557.92" y="784.1999999999999" width="4.28" height="16.3" fill="#a09428"/>
<rect x="1558.12" y="784.1999999999999" width="2.48" height="16.3" fill="#dcd454"/>
<rect x="1562.20" y="784.1999999999999" width="4.28" height="16.3" fill="#a09428"/>
<rect x="1562.40" y="784.1999999999999" width="2.48" height="16.3" fill="#d8d050"/>
<rect x="1566.48" y="784.1999999999999" width="4.28" height="16.3" fill="#a09428"/>
<rect x="1566.68" y="784.1999999999999" width="2.48" height="16.3" fill="#dcd454"/>
<rect x="1570.76" y="784.1999999999999" width="4.28" height="16.3" fill="#9a302c"/>
<rect x="1570.96" y="784.1999999999999" width="2.48" height="16.3" fill="#cc3c40"/>
<rect x="1575.04" y="784.1999999999999" width="4.28" height="16.3" fill="#4e1c24"/>
<rect x="1575.24" y="784.1999999999999" width="2.48" height="16.3" fill="#5c2028"/>
<rect x="1579.32" y="784.1999999999999" width="4.28" height="16.3" fill="#4e1c24"/>
<rect x="1579.52" y="784.1999999999999" width="2.48" height="16.3" fill="#5c2028"/>
<circle cx="1245.4" cy="837.7" r="10.2" fill="#1e1e1f" stroke="#cc8850" stroke-width="1.9"/>
<circle cx="1478" cy="837.7" r="12" fill="#f2f2f2"/>
<path d="M1472.3 835.3000000000001 H1474.6 L1478.3 831.7 V843.7 L1474.6 840.1 H1472.3 Z" fill="#1e1e1e"/><path d="M1479.6 831.9000000000001 A5.4 5.8 0 0 1 1479.6 843.5 Z" fill="#c4c4c4"/><path d="M1479.6 831.9000000000001 A5.4 5.8 0 0 1 1479.6 843.5" fill="none" stroke="#3c3c3c" stroke-width="1.6"/>
<rect x="1540.8" y="829.6" width="42.8" height="16.3" fill="#2a3020"/>
<rect x="1540.80" y="829.6" width="4.28" height="16.3" fill="#4a9038"/>
<rect x="1541.00" y="829.6" width="2.48" height="16.3" fill="#80c464"/>
<rect x="1545.08" y="829.6" width="4.28" height="16.3" fill="#4a9038"/>
<rect x="1545.28" y="829.6" width="2.48" height="16.3" fill="#7cc060"/>
<rect x="1549.36" y="829.6" width="4.28" height="16.3" fill="#4a9038"/>
<rect x="1549.56" y="829.6" width="2.48" height="16.3" fill="#80c464"/>
<rect x="1553.64" y="829.6" width="4.28" height="16.3" fill="#4a9038"/>
<rect x="1553.84" y="829.6" width="2.48" height="16.3" fill="#7cc060"/>
<rect x="1557.92" y="829.6" width="4.28" height="16.3" fill="#5a5628"/>
<rect x="1558.12" y="829.6" width="2.48" height="16.3" fill="#7e7a3c"/>
<rect x="1562.20" y="829.6" width="4.28" height="16.3" fill="#5a5628"/>
<rect x="1562.40" y="829.6" width="2.48" height="16.3" fill="#7e7a3c"/>
<rect x="1566.48" y="829.6" width="4.28" height="16.3" fill="#5a5628"/>
<rect x="1566.68" y="829.6" width="2.48" height="16.3" fill="#7e7a3c"/>
<rect x="1570.76" y="829.6" width="4.28" height="16.3" fill="#4e1c24"/>
<rect x="1570.96" y="829.6" width="2.48" height="16.3" fill="#5c2028"/>
<rect x="1575.04" y="829.6" width="4.28" height="16.3" fill="#4e1c24"/>
<rect x="1575.24" y="829.6" width="2.48" height="16.3" fill="#5c2028"/>
<rect x="1579.32" y="829.6" width="4.28" height="16.3" fill="#4e1c24"/>
<rect x="1579.52" y="829.6" width="2.48" height="16.3" fill="#5c2028"/>
<circle cx="1245.4" cy="869" r="10.2" fill="#1e1e1f" stroke="#cc8850" stroke-width="1.9"/>
<circle cx="1478" cy="869" r="12" fill="#f2f2f2"/>
<path d="M1472.3 866.6 H1474.6 L1478.3 863 V875 L1474.6 871.4 H1472.3 Z" fill="#1e1e1e"/><path d="M1479.6 863.2 A5.4 5.8 0 0 1 1479.6 874.8 Z" fill="#c4c4c4"/><path d="M1479.6 863.2 A5.4 5.8 0 0 1 1479.6 874.8" fill="none" stroke="#3c3c3c" stroke-width="1.6"/>
<rect x="1540.8" y="860.9" width="42.8" height="16.3" fill="#2a3020"/>
<rect x="1540.80" y="860.9" width="4.28" height="16.3" fill="#4a9038"/>
<rect x="1541.00" y="860.9" width="2.48" height="16.3" fill="#80c464"/>
<rect x="1545.08" y="860.9" width="4.28" height="16.3" fill="#4a9038"/>
<rect x="1545.28" y="860.9" width="2.48" height="16.3" fill="#7cc060"/>
<rect x="1549.36" y="860.9" width="4.28" height="16.3" fill="#4a9038"/>
<rect x="1549.56" y="860.9" width="2.48" height="16.3" fill="#80c464"/>
<rect x="1553.64" y="860.9" width="4.28" height="16.3" fill="#4a9038"/>
<rect x="1553.84" y="860.9" width="2.48" height="16.3" fill="#7cc060"/>
<rect x="1557.92" y="860.9" width="4.28" height="16.3" fill="#5a5628"/>
<rect x="1558.12" y="860.9" width="2.48" height="16.3" fill="#7e7a3c"/>
<rect x="1562.20" y="860.9" width="4.28" height="16.3" fill="#5a5628"/>
<rect x="1562.40" y="860.9" width="2.48" height="16.3" fill="#7e7a3c"/>
<rect x="1566.48" y="860.9" width="4.28" height="16.3" fill="#5a5628"/>
<rect x="1566.68" y="860.9" width="2.48" height="16.3" fill="#7e7a3c"/>
<rect x="1570.76" y="860.9" width="4.28" height="16.3" fill="#4e1c24"/>
<rect x="1570.96" y="860.9" width="2.48" height="16.3" fill="#5c2028"/>
<rect x="1575.04" y="860.9" width="4.28" height="16.3" fill="#4e1c24"/>
<rect x="1575.24" y="860.9" width="2.48" height="16.3" fill="#5c2028"/>
<rect x="1579.32" y="860.9" width="4.28" height="16.3" fill="#4e1c24"/>
<rect x="1579.52" y="860.9" width="2.48" height="16.3" fill="#5c2028"/>
<circle cx="1245.4" cy="914.3" r="10.2" fill="#1e1e1f" stroke="#cc8850" stroke-width="1.9"/>
<circle cx="1478" cy="914.3" r="12" fill="#f2f2f2"/>
<path d="M1472.3 911.9 H1474.6 L1478.3 908.3 V920.3 L1474.6 916.6999999999999 H1472.3 Z" fill="#1e1e1e"/><path d="M1479.6 908.5 A5.4 5.8 0 0 1 1479.6 920.0999999999999 Z" fill="#c4c4c4"/><path d="M1479.6 908.5 A5.4 5.8 0 0 1 1479.6 920.0999999999999" fill="none" stroke="#3c3c3c" stroke-width="1.6"/>
<rect x="1540.8" y="906.1999999999999" width="42.8" height="16.3" fill="#2a3020"/>
<rect x="1540.80" y="906.1999999999999" width="4.28" height="16.3" fill="#4a9038"/>
<rect x="1541.00" y="906.1999999999999" width="2.48" height="16.3" fill="#80c464"/>
<rect x="1545.08" y="906.1999999999999" width="4.28" height="16.3" fill="#4a9038"/>
<rect x="1545.28" y="906.1999999999999" width="2.48" height="16.3" fill="#7cc060"/>
<rect x="1549.36" y="906.1999999999999" width="4.28" height="16.3" fill="#4a9038"/>
<rect x="1549.56" y="906.1999999999999" width="2.48" height="16.3" fill="#80c464"/>
<rect x="1553.64" y="906.1999999999999" width="4.28" height="16.3" fill="#4a9038"/>
<rect x="1553.84" y="906.1999999999999" width="2.48" height="16.3" fill="#7cc060"/>
<rect x="1557.92" y="906.1999999999999" width="4.28" height="16.3" fill="#a09428"/>
<rect x="1558.12" y="906.1999999999999" width="2.48" height="16.3" fill="#dcd454"/>
<rect x="1562.20" y="906.1999999999999" width="4.28" height="16.3" fill="#a09428"/>
<rect x="1562.40" y="906.1999999999999" width="2.48" height="16.3" fill="#d8d050"/>
<rect x="1566.48" y="906.1999999999999" width="4.28" height="16.3" fill="#a09428"/>
<rect x="1566.68" y="906.1999999999999" width="2.48" height="16.3" fill="#dcd454"/>
<rect x="1570.76" y="906.1999999999999" width="4.28" height="16.3" fill="#7a2a2c"/>
<rect x="1570.96" y="906.1999999999999" width="2.48" height="16.3" fill="#a8383a"/>
<rect x="1575.04" y="906.1999999999999" width="4.28" height="16.3" fill="#4e1c24"/>
<rect x="1575.24" y="906.1999999999999" width="2.48" height="16.3" fill="#5c2028"/>
<rect x="1579.32" y="906.1999999999999" width="4.28" height="16.3" fill="#4e1c24"/>
<rect x="1579.52" y="906.1999999999999" width="2.48" height="16.3" fill="#5c2028"/>
<circle cx="1245.4" cy="945.6" r="10.2" fill="#1e1e1f" stroke="#cc8850" stroke-width="1.9"/>
<circle cx="1478" cy="945.6" r="12" fill="#f2f2f2"/>
<path d="M1472.3 943.2 H1474.6 L1478.3 939.6 V951.6 L1474.6 948.0 H1472.3 Z" fill="#1e1e1e"/><path d="M1479.6 939.8000000000001 A5.4 5.8 0 0 1 1479.6 951.4 Z" fill="#c4c4c4"/><path d="M1479.6 939.8000000000001 A5.4 5.8 0 0 1 1479.6 951.4" fill="none" stroke="#3c3c3c" stroke-width="1.6"/>
<rect x="1540.8" y="937.5" width="42.8" height="16.3" fill="#2a3020"/>
<rect x="1540.80" y="937.5" width="4.28" height="16.3" fill="#4a9038"/>
<rect x="1541.00" y="937.5" width="2.48" height="16.3" fill="#80c464"/>
<rect x="1545.08" y="937.5" width="4.28" height="16.3" fill="#4a9038"/>
<rect x="1545.28" y="937.5" width="2.48" height="16.3" fill="#7cc060"/>
<rect x="1549.36" y="937.5" width="4.28" height="16.3" fill="#4a9038"/>
<rect x="1549.56" y="937.5" width="2.48" height="16.3" fill="#80c464"/>
<rect x="1553.64" y="937.5" width="4.28" height="16.3" fill="#4a9038"/>
<rect x="1553.84" y="937.5" width="2.48" height="16.3" fill="#7cc060"/>
<rect x="1557.92" y="937.5" width="4.28" height="16.3" fill="#a09428"/>
<rect x="1558.12" y="937.5" width="2.48" height="16.3" fill="#dcd454"/>
<rect x="1562.20" y="937.5" width="4.28" height="16.3" fill="#a09428"/>
<rect x="1562.40" y="937.5" width="2.48" height="16.3" fill="#d8d050"/>
<rect x="1566.48" y="937.5" width="4.28" height="16.3" fill="#a09428"/>
<rect x="1566.68" y="937.5" width="2.48" height="16.3" fill="#dcd454"/>
<rect x="1570.76" y="937.5" width="4.28" height="16.3" fill="#9a302c"/>
<rect x="1570.96" y="937.5" width="2.48" height="16.3" fill="#cc3c40"/>
<rect x="1575.04" y="937.5" width="4.28" height="16.3" fill="#4e1c24"/>
<rect x="1575.24" y="937.5" width="2.48" height="16.3" fill="#5c2028"/>
<rect x="1579.32" y="937.5" width="4.28" height="16.3" fill="#4e1c24"/>
<rect x="1579.52" y="937.5" width="2.48" height="16.3" fill="#5c2028"/>
<circle cx="1495" cy="233.6" r="11.2" fill="none" stroke="#b4b4b6" stroke-width="2.4"/><circle cx="1495" cy="233.6" r="5.3" fill="none" stroke="#e08c40" stroke-width="2.9"/>
<circle cx="1552" cy="233.6" r="11.2" fill="none" stroke="#e08c40" stroke-width="2.9"/><circle cx="1552" cy="233.6" r="5.3" fill="none" stroke="#b4b4b6" stroke-width="2.8"/>
<rect x="1491.0" y="267.5" width="7.2" height="212.5" rx="3.6" fill="#070707"/>
<rect x="1492.1" y="322" width="5" height="157" rx="2.5" fill="#dc8c3e"/>
<rect x="1486.0" y="302" width="17.2" height="31" rx="4" fill="url(#knob)"/>
<rect x="1547.7" y="267.5" width="7.2" height="212.5" rx="3.6" fill="#070707"/>
<rect x="1548.8" y="378" width="5" height="101" rx="2.5" fill="#dc8c3e"/>
<rect x="1542.7" y="358" width="17.2" height="31" rx="4" fill="url(#knob)"/>
<path d="M1514 374 H1531" stroke="#6a6a6c" stroke-width="1.5"/>
<path d="M1465 562.5 H1499 M1547.5 562.5 H1580" stroke="#6a6a6c" stroke-width="1.8"/>
<circle cx="1523.6" cy="563.5" r="15" fill="#f2f2f2"/>
<path d="M1516 560.5 H1519 L1523.5 556 V571 L1519 566.5 H1516 Z" fill="#1e1e1e"/><path d="M1525 556.3 A6.8 7.2 0 0 1 1525 570.7 Z" fill="#c4c4c4"/><path d="M1525 556.3 A6.8 7.2 0 0 1 1525 570.7" fill="none" stroke="#3c3c3c" stroke-width="1.9"/>
<circle cx="1476" cy="617" r="11" fill="#262729" stroke="#6e6e70" stroke-width="1.8"/>
<path d="M1471 614.5 H1474 L1479 610 V624 L1474 619.5 H1471 Z" fill="#707072"/>
</svg>
<div style="left:39.5px;top:14.3px;height:25.0px;font-size:12.5px;line-height:25.0px;color:#2a1c10;font-weight:bold;white-space:nowrap;transform:scaleX(0.9936);transform-origin:0 50%;">NORMAL</div>
<div style="left:144.4px;top:14.3px;height:25.0px;font-size:12.5px;line-height:25.0px;color:#e6e6e6;font-weight:bold;white-space:nowrap;transform:scaleX(0.9191);transform-origin:0 50%;">SQ</div>
<div style="left:210.6px;top:14.3px;height:25.0px;font-size:12.5px;line-height:25.0px;color:#e6e6e6;font-weight:bold;white-space:nowrap;transform:scaleX(0.8638);transform-origin:0 50%;">BASS</div>
<div style="left:1375.8px;top:15.0px;height:24px;font-size:12px;line-height:24px;color:#e6e6e6;font-weight:bold;white-space:nowrap;transform:scaleX(0.9546);transform-origin:0 50%;">VALET</div>
<div style="left:-0.7000000000000028px;top:70.3px;width:80px;height:35.0px;text-align:center;font-size:17.5px;line-height:35.0px;color:#e8892e;font-weight:bold;white-space:nowrap;transform:rotate(90deg) scaleX(0.8484);transform-origin:center">SETUP</div>
<div style="left:-1.0px;top:153.0px;width:80px;height:34px;text-align:center;font-size:17px;line-height:34px;color:#c0c0c0;font-weight:normal;white-space:nowrap;transform:rotate(90deg) scaleX(0.9356);transform-origin:center;-webkit-text-stroke:0.45px #c0c0c0">TUNE</div>
<div style="left:22.4px;top:952.3px;width:20px;height:20px;line-height:20px;text-align:center;font-size:17px;font-weight:bold;color:#2a2a2c">?</div>
<div style="left:74.4px;top:65.3px;height:25.0px;font-size:12.5px;line-height:25.0px;color:#e6e6e6;font-weight:normal;white-space:nowrap;-webkit-text-stroke:0.35px #e6e6e6;transform:scaleX(0.9817);transform-origin:0 50%;">INPUTS</div>
<div style="left:304.2px;top:65.3px;height:25.0px;font-size:12.5px;line-height:25.0px;color:#e6e6e6;font-weight:normal;white-space:nowrap;-webkit-text-stroke:0.35px #e6e6e6;transform:scaleX(1.0083);transform-origin:0 50%;">INPUT MIXER</div>
<div style="left:210.8px;top:107.5px;width:20px;height:20px;line-height:20px;text-align:center;font-size:11.5px;font-weight:bold;color:#f0f0f0">1</div>
<div style="left:210.8px;top:138.8px;width:20px;height:20px;line-height:20px;text-align:center;font-size:11.5px;font-weight:bold;color:#f0f0f0">2</div>
<div style="left:210.8px;top:184.1px;width:20px;height:20px;line-height:20px;text-align:center;font-size:11.5px;font-weight:bold;color:#f0f0f0">3</div>
<div style="left:210.8px;top:215.4px;width:20px;height:20px;line-height:20px;text-align:center;font-size:11.5px;font-weight:bold;color:#f0f0f0">4</div>
<div style="left:210.8px;top:260.7px;width:20px;height:20px;line-height:20px;text-align:center;font-size:11.5px;font-weight:bold;color:#d0d0d0">5</div>
<div style="left:210.8px;top:292px;width:20px;height:20px;line-height:20px;text-align:center;font-size:11.5px;font-weight:bold;color:#d0d0d0">6</div>
<div style="left:210.8px;top:337.3px;width:20px;height:20px;line-height:20px;text-align:center;font-size:11.5px;font-weight:bold;color:#f0f0f0">7</div>
<div style="left:210.8px;top:368.6px;width:20px;height:20px;line-height:20px;text-align:center;font-size:11.5px;font-weight:bold;color:#f0f0f0">8</div>
<div style="left:75.8px;top:513.5px;height:25.0px;font-size:12.5px;line-height:25.0px;color:#e6e6e6;font-weight:normal;white-space:nowrap;-webkit-text-stroke:0.35px #e6e6e6;transform:scaleX(0.9155);transform-origin:0 50%;">EQUALIZERS</div>
<div style="left:455.2px;top:518.5px;width:20px;height:20px;line-height:20px;text-align:center;font-size:11.5px;font-weight:normal;-webkit-text-stroke:0.4px #f8eee0;color:#f8eee0">4</div>
<div style="left:482.6px;top:518.5px;width:20px;height:20px;line-height:20px;text-align:center;font-size:11.5px;font-weight:normal;-webkit-text-stroke:0.4px #f8eee0;color:#f8eee0">3</div>
<div style="left:533px;top:518.5px;width:20px;height:20px;line-height:20px;text-align:center;font-size:11.5px;font-weight:normal;-webkit-text-stroke:0.4px #f8eee0;color:#f8eee0">2</div>
<div style="left:560.4px;top:518.5px;width:20px;height:20px;line-height:20px;text-align:center;font-size:11.5px;font-weight:normal;-webkit-text-stroke:0.4px #f8eee0;color:#f8eee0">1</div>
<div style="left:630.9px;top:68.3px;height:25.0px;font-size:12.5px;line-height:25.0px;color:#8e8e8e;font-weight:normal;white-space:nowrap;transform:scaleX(1.0079);transform-origin:0 50%;-webkit-text-stroke:0.25px #8e8e8e;">EQ MIXING</div>
<div style="left:714px;top:66.8px;height:26px;font-size:13px;line-height:26px;color:#e6e6e6;font-weight:normal;white-space:nowrap;-webkit-text-stroke:0.25px #e6e6e6;">2</div>
<div style="left:713.5px;top:105.8px;height:26px;font-size:13px;line-height:26px;color:#9c9c9c;font-weight:normal;white-space:nowrap;-webkit-text-stroke:0.25px #9c9c9c;">0.0 dB</div>
<div style="left:713.5px;top:137.10000000000002px;height:26px;font-size:13px;line-height:26px;color:#e6e6e6;font-weight:normal;white-space:nowrap;-webkit-text-stroke:0.25px #e6e6e6;">0.0 dB</div>
<div style="left:713.5px;top:182.4px;height:26px;font-size:13px;line-height:26px;color:#9c9c9c;font-weight:normal;white-space:nowrap;-webkit-text-stroke:0.25px #9c9c9c;">0.0 dB</div>
<div style="left:713.5px;top:213.70000000000002px;height:26px;font-size:13px;line-height:26px;color:#9c9c9c;font-weight:normal;white-space:nowrap;-webkit-text-stroke:0.25px #9c9c9c;">0.0 dB</div>
<div style="left:713.5px;top:259.0px;height:26px;font-size:13px;line-height:26px;color:#9c9c9c;font-weight:normal;white-space:nowrap;-webkit-text-stroke:0.25px #9c9c9c;">0.0 dB</div>
<div style="left:713.5px;top:290.3px;height:26px;font-size:13px;line-height:26px;color:#9c9c9c;font-weight:normal;white-space:nowrap;-webkit-text-stroke:0.25px #9c9c9c;">0.0 dB</div>
<div style="left:713.5px;top:335.6px;height:26px;font-size:13px;line-height:26px;color:#9c9c9c;font-weight:normal;white-space:nowrap;-webkit-text-stroke:0.25px #9c9c9c;">0.0 dB</div>
<div style="left:713.5px;top:366.90000000000003px;height:26px;font-size:13px;line-height:26px;color:#e6e6e6;font-weight:normal;white-space:nowrap;-webkit-text-stroke:0.25px #e6e6e6;">0.0 dB</div>
<div style="left:857px;top:237.0px;height:26px;font-size:13px;line-height:26px;color:#f0dada;font-weight:normal;white-space:nowrap;-webkit-text-stroke:0.25px #f0dada;">6.0 dB</div>
<div style="left:678.5px;top:414.3px;height:25.0px;font-size:12.5px;line-height:25.0px;color:#8e8e8e;font-weight:normal;white-space:nowrap;transform:scaleX(0.9495);transform-origin:0 50%;-webkit-text-stroke:0.25px #8e8e8e;">PRE-EQ LEVEL TRIM</div>
<div style="left:684px;top:443.8px;height:26px;font-size:13px;line-height:26px;color:#e6e6e6;font-weight:normal;white-space:nowrap;-webkit-text-stroke:0.25px #e6e6e6;">0.0 dB</div>
<div style="left:1060.2px;top:68.3px;height:25.0px;font-size:12.5px;line-height:25.0px;color:#8e8e8e;font-weight:normal;white-space:nowrap;transform:scaleX(1.0079);transform-origin:0 50%;-webkit-text-stroke:0.25px #8e8e8e;">EQ MIXING</div>
<div style="left:1143.3px;top:66.8px;height:26px;font-size:13px;line-height:26px;color:#e6e6e6;font-weight:normal;white-space:nowrap;-webkit-text-stroke:0.25px #e6e6e6;">1</div>
<div style="left:1142.8px;top:105.8px;height:26px;font-size:13px;line-height:26px;color:#e6e6e6;font-weight:normal;white-space:nowrap;-webkit-text-stroke:0.25px #e6e6e6;">0.0 dB</div>
<div style="left:1142.8px;top:137.10000000000002px;height:26px;font-size:13px;line-height:26px;color:#9c9c9c;font-weight:normal;white-space:nowrap;-webkit-text-stroke:0.25px #9c9c9c;">0.0 dB</div>
<div style="left:1142.8px;top:182.4px;height:26px;font-size:13px;line-height:26px;color:#9c9c9c;font-weight:normal;white-space:nowrap;-webkit-text-stroke:0.25px #9c9c9c;">0.0 dB</div>
<div style="left:1142.8px;top:213.70000000000002px;height:26px;font-size:13px;line-height:26px;color:#9c9c9c;font-weight:normal;white-space:nowrap;-webkit-text-stroke:0.25px #9c9c9c;">0.0 dB</div>
<div style="left:1142.8px;top:259.0px;height:26px;font-size:13px;line-height:26px;color:#9c9c9c;font-weight:normal;white-space:nowrap;-webkit-text-stroke:0.25px #9c9c9c;">0.0 dB</div>
<div style="left:1142.8px;top:290.3px;height:26px;font-size:13px;line-height:26px;color:#9c9c9c;font-weight:normal;white-space:nowrap;-webkit-text-stroke:0.25px #9c9c9c;">0.0 dB</div>
<div style="left:1142.8px;top:335.6px;height:26px;font-size:13px;line-height:26px;color:#e6e6e6;font-weight:normal;white-space:nowrap;-webkit-text-stroke:0.25px #e6e6e6;">0.0 dB</div>
<div style="left:1142.8px;top:366.90000000000003px;height:26px;font-size:13px;line-height:26px;color:#9c9c9c;font-weight:normal;white-space:nowrap;-webkit-text-stroke:0.25px #9c9c9c;">0.0 dB</div>
<div style="left:1286.3px;top:237.0px;height:26px;font-size:13px;line-height:26px;color:#f0dada;font-weight:normal;white-space:nowrap;-webkit-text-stroke:0.25px #f0dada;">6.0 dB</div>
<div style="left:1107.8px;top:414.3px;height:25.0px;font-size:12.5px;line-height:25.0px;color:#8e8e8e;font-weight:normal;white-space:nowrap;transform:scaleX(0.9495);transform-origin:0 50%;-webkit-text-stroke:0.25px #8e8e8e;">PRE-EQ LEVEL TRIM</div>
<div style="left:1113.3px;top:443.8px;height:26px;font-size:13px;line-height:26px;color:#e6e6e6;font-weight:normal;white-space:nowrap;-webkit-text-stroke:0.25px #e6e6e6;">0.0 dB</div>
<div style="left:76.8px;top:575.5px;height:25.0px;font-size:12.5px;line-height:25.0px;color:#e6e6e6;font-weight:normal;white-space:nowrap;-webkit-text-stroke:0.35px #e6e6e6;transform:scaleX(0.9095);transform-origin:0 50%;">ROUTER</div>
<div style="left:627.4px;top:578.8px;height:25.0px;font-size:12.5px;line-height:25.0px;color:#e6e6e6;font-weight:normal;white-space:nowrap;-webkit-text-stroke:0.35px #e6e6e6;transform:scaleX(0.8797);transform-origin:0 50%;">CROSSOVERS</div>
<div style="left:756.6px;top:578.8px;height:25.0px;font-size:12.5px;line-height:25.0px;color:#e6e6e6;font-weight:normal;white-space:nowrap;-webkit-text-stroke:0.35px #e6e6e6;transform:scaleX(0.9737);transform-origin:0 50%;">VOLUME</div>
<div style="left:905px;top:578.8px;height:25.0px;font-size:12.5px;line-height:25.0px;color:#e6e6e6;font-weight:normal;white-space:nowrap;-webkit-text-stroke:0.35px #e6e6e6;transform:scaleX(0.9247);transform-origin:0 50%;">SPEAKER DISTANCE</div>
<div style="left:1097.6px;top:578.8px;height:25.0px;font-size:12.5px;line-height:25.0px;color:#e6e6e6;font-weight:normal;white-space:nowrap;-webkit-text-stroke:0.35px #e6e6e6;transform:scaleX(0.9867);transform-origin:0 50%;">POLARITY</div>
<div style="left:1205.6px;top:578.8px;height:25.0px;font-size:12.5px;line-height:25.0px;color:#e6e6e6;font-weight:normal;white-space:nowrap;-webkit-text-stroke:0.35px #e6e6e6;transform:scaleX(0.9778);transform-origin:0 50%;">OUTPUTS</div>
<div style="left:911px;top:672.8px;height:26px;font-size:13px;line-height:26px;color:#e6e6e6;font-weight:normal;white-space:nowrap;-webkit-text-stroke:0.25px #e6e6e6;">16.2 inch</div>
<div style="left:911px;top:704.1px;height:26px;font-size:13px;line-height:26px;color:#e6e6e6;font-weight:normal;white-space:nowrap;-webkit-text-stroke:0.25px #e6e6e6;">34.3 inch</div>
<div style="left:911px;top:749.5px;height:26px;font-size:13px;line-height:26px;color:#e6e6e6;font-weight:normal;white-space:nowrap;-webkit-text-stroke:0.25px #e6e6e6;">14.2 inch</div>
<div style="left:911px;top:780.8px;height:26px;font-size:13px;line-height:26px;color:#e6e6e6;font-weight:normal;white-space:nowrap;-webkit-text-stroke:0.25px #e6e6e6;">29.0 inch</div>
<div style="left:911px;top:826.2px;height:26px;font-size:13px;line-height:26px;color:#e6e6e6;font-weight:normal;white-space:nowrap;-webkit-text-stroke:0.25px #e6e6e6;">0.0 inch</div>
<div style="left:911px;top:857.5px;height:26px;font-size:13px;line-height:26px;color:#e6e6e6;font-weight:normal;white-space:nowrap;-webkit-text-stroke:0.25px #e6e6e6;">0.0 inch</div>
<div style="left:911px;top:902.8px;height:26px;font-size:13px;line-height:26px;color:#e6e6e6;font-weight:normal;white-space:nowrap;-webkit-text-stroke:0.25px #e6e6e6;">0.0 inch</div>
<div style="left:911px;top:934.1px;height:26px;font-size:13px;line-height:26px;color:#e6e6e6;font-weight:normal;white-space:nowrap;-webkit-text-stroke:0.25px #e6e6e6;">0.0 inch</div>
<div style="left:1235.4px;top:674.3px;width:20px;height:20px;line-height:20px;text-align:center;font-size:11.5px;font-weight:bold;color:#f0f0f0">A</div>
<div style="left:1516.5px;top:673.0999999999999px;width:20px;height:25.0px;text-align:center;font-size:12.5px;line-height:25.0px;color:#e0e0e0;font-weight:normal;white-space:nowrap;-webkit-text-stroke:0.3px #e0e0e0">A</div>
<div style="left:1235.4px;top:705.6px;width:20px;height:20px;line-height:20px;text-align:center;font-size:11.5px;font-weight:bold;color:#f0f0f0">B</div>
<div style="left:1516.5px;top:704.4px;width:20px;height:25.0px;text-align:center;font-size:12.5px;line-height:25.0px;color:#e0e0e0;font-weight:normal;white-space:nowrap;-webkit-text-stroke:0.3px #e0e0e0">B</div>
<div style="left:1235.4px;top:751px;width:20px;height:20px;line-height:20px;text-align:center;font-size:11.5px;font-weight:bold;color:#f0f0f0">C</div>
<div style="left:1516.5px;top:749.8px;width:20px;height:25.0px;text-align:center;font-size:12.5px;line-height:25.0px;color:#e0e0e0;font-weight:normal;white-space:nowrap;-webkit-text-stroke:0.3px #e0e0e0">C</div>
<div style="left:1235.4px;top:782.3px;width:20px;height:20px;line-height:20px;text-align:center;font-size:11.5px;font-weight:bold;color:#f0f0f0">D</div>
<div style="left:1516.5px;top:781.0999999999999px;width:20px;height:25.0px;text-align:center;font-size:12.5px;line-height:25.0px;color:#e0e0e0;font-weight:normal;white-space:nowrap;-webkit-text-stroke:0.3px #e0e0e0">D</div>
<div style="left:1235.4px;top:827.7px;width:20px;height:20px;line-height:20px;text-align:center;font-size:11.5px;font-weight:bold;color:#f0f0f0">E</div>
<div style="left:1516.5px;top:826.5px;width:20px;height:25.0px;text-align:center;font-size:12.5px;line-height:25.0px;color:#e0e0e0;font-weight:normal;white-space:nowrap;-webkit-text-stroke:0.3px #e0e0e0">E</div>
<div style="left:1235.4px;top:859px;width:20px;height:20px;line-height:20px;text-align:center;font-size:11.5px;font-weight:bold;color:#f0f0f0">F</div>
<div style="left:1516.5px;top:857.8px;width:20px;height:25.0px;text-align:center;font-size:12.5px;line-height:25.0px;color:#e0e0e0;font-weight:normal;white-space:nowrap;-webkit-text-stroke:0.3px #e0e0e0">F</div>
<div style="left:1235.4px;top:904.3px;width:20px;height:20px;line-height:20px;text-align:center;font-size:11.5px;font-weight:bold;color:#f0f0f0">G</div>
<div style="left:1516.5px;top:903.0999999999999px;width:20px;height:25.0px;text-align:center;font-size:12.5px;line-height:25.0px;color:#e0e0e0;font-weight:normal;white-space:nowrap;-webkit-text-stroke:0.3px #e0e0e0">G</div>
<div style="left:1235.4px;top:935.6px;width:20px;height:20px;line-height:20px;text-align:center;font-size:11.5px;font-weight:bold;color:#f0f0f0">H</div>
<div style="left:1516.5px;top:934.4px;width:20px;height:25.0px;text-align:center;font-size:12.5px;line-height:25.0px;color:#e0e0e0;font-weight:normal;white-space:nowrap;-webkit-text-stroke:0.3px #e0e0e0">H</div>
<div style="left:1463.7px;top:146.1px;height:19.0px;font-size:9.5px;line-height:19.0px;color:#808080;font-weight:normal;white-space:nowrap;transform:scaleX(1.1272);transform-origin:0 50%;-webkit-text-stroke:0.25px #808080;">Simulation</div>
<div style="left:1541.6px;top:146.1px;height:19.0px;font-size:9.5px;line-height:19.0px;color:#58a84c;font-weight:normal;white-space:nowrap;transform:scaleX(1.1228);transform-origin:0 50%;-webkit-text-stroke:0.25px #58a84c;">None</div>
<div style="left:1516px;top:605.5px;height:26px;font-size:13px;line-height:26px;color:#e0e0e0;font-weight:normal;white-space:nowrap;-webkit-text-stroke:0.35px #e0e0e0;transform:scaleX(1.0502);transform-origin:0 50%;">S/PDIF</div>
</div></body></html>
